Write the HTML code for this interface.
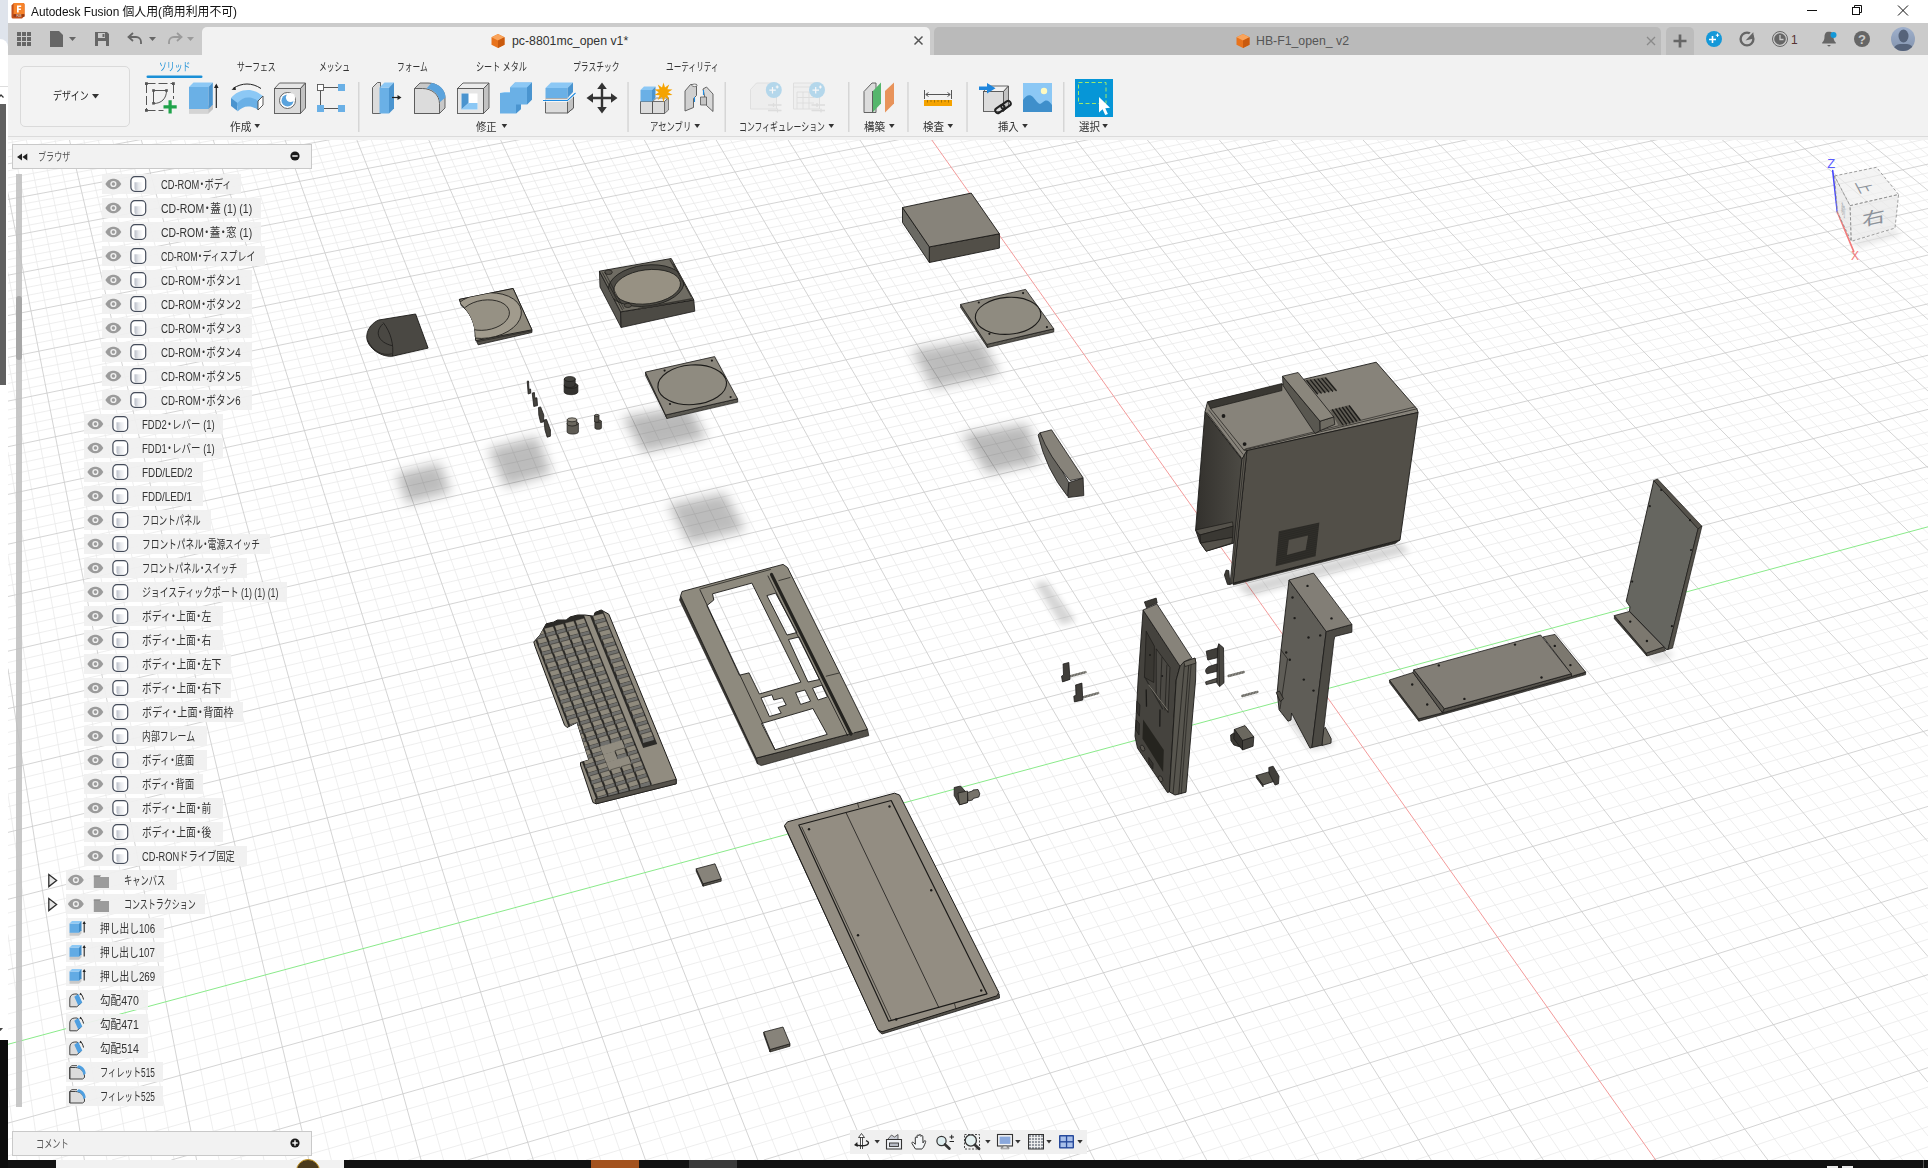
<!DOCTYPE html>
<html lang="ja"><head><meta charset="utf-8"><title>Autodesk Fusion</title>
<style>
html,body{margin:0;padding:0;background:#fff;overflow:hidden}
body{width:1928px;height:1168px;position:relative;font-family:"Liberation Sans","Noto Sans CJK JP",sans-serif;color:#222;font-size:12px}
.a{position:absolute}
.t{position:absolute;white-space:nowrap;line-height:1}
#vp{position:absolute;left:8px;top:137px;width:1920px;height:1023px;overflow:hidden;background:#fff}
#vp svg{position:absolute;left:-8px;top:-137px}
.md{margin:0 -.22em}
.row{position:absolute;height:20px;background:rgba(240,240,240,.92);}
.row .lb{position:absolute;top:4px;font-size:11.5px;white-space:nowrap;line-height:13px;color:#333;letter-spacing:-0.2px}
</style></head><body>
<div id="vp"><svg width="1928" height="1168" viewBox="0 0 1928 1168">
<path d="M8 143L41.4 137M8 149.9L79.2 137M8 156.8L117.1 137M8 170.8L192.8 137M8 177.9L230.7 137M8 185.1L268.6 137M8 192.3L306.4 137M8 206.8L382.2 137M8 214.2L420 137M8 221.6L457.9 137M8 229.1L495.8 137M8 244.2L571.5 137M8 251.9L609.4 137M8 259.6L647.2 137M8 267.4L685.1 137M8 283.2L760.8 137M8 291.1L798.7 137M8 299.2L836.6 137M8 307.3L874.4 137M8 323.7L950.2 137M8 332L988 137M8 340.4L1025.9 137M8 348.8L1063.8 137M8 366L1139.5 137M8 374.6L1177.4 137M8 383.4L1215.3 137M8 392.2L1253.1 137M8 410L1328.9 137M8 419.1L1366.8 137M8 428.2L1404.6 137M8 437.4L1442.5 137M8 456.1L1518.3 137M8 465.5L1556.1 137M8 475.1L1594 137M8 484.7L1631.9 137M8 504.2L1707.6 137M8 514.1L1745.5 137M8 524L1783.4 137M8 534.1L1821.2 137M8 554.5L1897 137M8 564.8L1928 138.5M8 575.3L1928 147M8 585.8L1928 155.5M8 607.2L1928 172.8M8 618L1928 181.6M8 629L1928 190.5M8 640L1928 199.4M8 662.5L1928 217.6M8 673.8L1928 226.8M8 685.3L1928 236.1M8 696.9L1928 245.5M8 720.5L1928 264.5M8 732.4L1928 274.2M8 744.5L1928 284M8 756.7L1928 293.9M8 781.4L1928 313.9M8 794L1928 324.1M8 806.7L1928 334.4M8 819.5L1928 344.7M8 845.5L1928 365.8M8 858.8L1928 376.6M8 872.1L1928 387.4M8 885.6L1928 398.3M8 913.1L1928 420.6M8 927.1L1928 431.9M8 941.2L1928 443.3M8 955.4L1928 454.8M8 984.4L1928 478.3M8 999.1L1928 490.2M8 1014L1928 502.3M8 1029.1L1928 514.5M8 1059.7L1928 539.3M8 1075.3L1928 551.9M8 1091.1L1928 564.7M8 1107L1928 577.6M8 1139.4L1928 603.9M8 1155.9L1928 617.2M52.8 1160L1928 630.7M112 1160L1928 644.4M230.5 1160L1928 672.3M289.8 1160L1928 686.5M349 1160L1928 700.8M408.3 1160L1928 715.4M526.8 1160L1928 745M586 1160L1928 760M645.3 1160L1928 775.3M704.6 1160L1928 790.8M823.1 1160L1928 822.3M882.3 1160L1928 838.3M941.6 1160L1928 854.6M1000.8 1160L1928 871.1M1119.4 1160L1928 904.7M1178.6 1160L1928 921.8M1237.9 1160L1928 939.2M1297.1 1160L1928 956.8M1415.6 1160L1928 992.7M1474.9 1160L1928 1011M1534.2 1160L1928 1029.6M1593.4 1160L1928 1048.5M1712 1160L1928 1087M1771.2 1160L1928 1106.6M1830.5 1160L1928 1126.6M1889.7 1160L1928 1146.8M8 1091.1L17.1 1160M8 934.4L39.5 1160M8 794.4L62 1160M8 555.2L106.9 1160M8 452.1L129.3 1160M8 358.2L151.7 1160M8 272.2L174.2 1160M11.4 137L219.1 1160M25.7 137L241.5 1160M40.1 137L264 1160M54.4 137L286.4 1160M83.1 137L331.3 1160M97.5 137L353.8 1160M111.8 137L376.2 1160M126.2 137L398.6 1160M154.9 137L443.5 1160M169.2 137L466 1160M183.6 137L488.4 1160M197.9 137L510.9 1160M226.6 137L555.8 1160M241 137L578.2 1160M255.3 137L600.7 1160M269.6 137L623.1 1160M298.3 137L668 1160M312.7 137L690.4 1160M327 137L712.9 1160M341.4 137L735.3 1160M370.1 137L780.2 1160M384.4 137L802.7 1160M398.8 137L825.1 1160M413.1 137L847.6 1160M441.8 137L892.5 1160M456.2 137L914.9 1160M470.5 137L937.3 1160M484.9 137L959.8 1160M513.6 137L1004.7 1160M527.9 137L1027.1 1160M542.3 137L1049.6 1160M556.6 137L1072 1160M585.3 137L1116.9 1160M599.7 137L1139.4 1160M614 137L1161.8 1160M628.4 137L1184.3 1160M657.1 137L1229.2 1160M671.4 137L1251.6 1160M685.8 137L1274.1 1160M700.1 137L1296.5 1160M728.8 137L1341.4 1160M743.1 137L1363.8 1160M757.5 137L1386.3 1160M771.8 137L1408.7 1160M800.5 137L1453.6 1160M814.9 137L1476.1 1160M829.2 137L1498.5 1160M843.6 137L1521 1160M872.3 137L1565.9 1160M886.6 137L1588.3 1160M901 137L1610.8 1160M915.3 137L1633.2 1160M944 137L1678.1 1160M958.4 137L1700.6 1160M972.7 137L1723 1160M987.1 137L1745.5 1160M1015.8 137L1790.4 1160M1030.1 137L1812.8 1160M1044.5 137L1835.3 1160M1058.8 137L1857.7 1160M1087.5 137L1902.6 1160M1101.9 137L1925.1 1160M1116.2 137L1928 1136M1130.6 137L1928 1108.9M1159.3 137L1928 1056.2M1173.6 137L1928 1030.5M1188 137L1928 1005.4M1202.3 137L1928 980.7M1231 137L1928 932.7M1245.4 137L1928 909.3M1259.7 137L1928 886.4M1274.1 137L1928 863.8M1302.8 137L1928 819.9M1317.1 137L1928 798.5M1331.5 137L1928 777.5M1345.8 137L1928 756.8M1374.5 137L1928 716.5M1388.9 137L1928 696.8M1403.2 137L1928 677.5M1417.6 137L1928 658.4M1446.3 137L1928 621.3M1460.6 137L1928 603.1M1475 137L1928 585.3M1489.3 137L1928 567.7M1518 137L1928 533.4M1532.4 137L1928 516.6M1546.7 137L1928 500.1M1561.1 137L1928 483.8M1589.8 137L1928 451.9M1604.2 137L1928 436.4M1618.5 137L1928 421M1632.9 137L1928 405.9M1661.6 137L1928 376.3M1675.9 137L1928 361.8M1690.3 137L1928 347.5M1704.6 137L1928 333.4M1733.3 137L1928 305.8M1747.7 137L1928 292.3M1762 137L1928 279M1776.4 137L1928 265.9M1805.1 137L1928 240.1M1819.4 137L1928 227.4M1833.8 137L1928 215M1848.1 137L1928 202.7M1876.8 137L1928 178.5M1891.2 137L1928 166.7M1905.5 137L1928 155M1919.9 137L1928 143.5" stroke="#eaeaea" stroke-width=".8" fill="none"/>
<path d="M8 163.8L155 137M8 199.5L344.3 137M8 236.6L533.6 137M8 275.2L723 137M8 315.5L912.3 137M8 357.4L1101.7 137M8 401.1L1291 137M8 446.7L1480.4 137M8 494.4L1669.7 137M8 544.2L1859.1 137M8 596.5L1928 164.1M8 651.2L1928 208.5M8 708.6L1928 255M8 769L1928 303.8M8 832.4L1928 355.2M8 899.3L1928 409.4M8 969.8L1928 466.5M8 1123.1L1928 590.6M171.3 1160L1928 658.3M467.5 1160L1928 730.1M763.8 1160L1928 806.4M1060.1 1160L1928 887.8M1356.4 1160L1928 974.6M1652.7 1160L1928 1067.6M8 668.7L84.4 1160M8 193.2L196.6 1160M68.8 137L308.9 1160M140.5 137L421.1 1160M212.3 137L533.3 1160M284 137L645.5 1160M355.7 137L757.8 1160M427.5 137L870 1160M499.2 137L982.2 1160M571 137L1094.5 1160M642.7 137L1206.7 1160M714.4 137L1318.9 1160M786.2 137L1431.2 1160M857.9 137L1543.4 1160M1001.4 137L1767.9 1160M1073.2 137L1880.2 1160M1144.9 137L1928 1082.3M1216.7 137L1928 956.5M1288.4 137L1928 841.7M1360.2 137L1928 736.5M1431.9 137L1928 639.7M1503.7 137L1928 550.4M1575.5 137L1928 467.7M1647.2 137L1928 391M1719 137L1928 319.5M1790.7 137L1928 252.9M1862.5 137L1928 190.5" stroke="#cccccc" stroke-width=".85" fill="none"/>
<path d="M929.7 137L1655.7 1160" stroke="#f39a9a" stroke-width="1" fill="none"/>
<path d="M8 1044.3L1928 526.8" stroke="#8aea8a" stroke-width="1" fill="none"/>
<defs>
<filter id="sh" x="-40%" y="-40%" width="180%" height="180%"><feGaussianBlur stdDeviation="6"/></filter>
<filter id="sh2" x="-40%" y="-40%" width="180%" height="180%"><feGaussianBlur stdDeviation="3"/></filter>
<linearGradient id="gl" x1="0" y1="0" x2="1" y2="0"><stop offset="0" stop-color="#33312d"/><stop offset="1" stop-color="#4c4a44"/></linearGradient>
<pattern id="dots" width="2" height="2" patternUnits="userSpaceOnUse" patternTransform="rotate(-14)"><rect width="2" height="2" fill="#1f1e1b"/><circle cx="1" cy="1" r=".62" fill="#5a574f"/></pattern>
</defs>
<polygon points="396,474 440,463 451,492 407,504" fill="#000" opacity="0.26" filter="url(#sh)"/>
<polygon points="488.1,448.7 537.5,436.3 551.6,473.3 505.8,487.5" fill="#000" opacity="0.26" filter="url(#sh)"/>
<polygon points="622.2,416.9 689.2,406.3 706.8,438.1 643.3,452.2" fill="#000" opacity="0.27" filter="url(#sh)"/>
<polygon points="668,505.1 724.5,492.8 745.6,529.8 689.2,543.9" fill="#000" opacity="0.26" filter="url(#sh)"/>
<polygon points="911.4,349.9 982,339.3 999.6,374.6 932.6,388.7" fill="#000" opacity="0.26" filter="url(#sh)"/>
<polygon points="961.2,435 1027.5,423.8 1040,462.5 987.5,473.8" fill="#000" opacity="0.27" filter="url(#sh)"/>
<polygon points="1034,583 1046,581 1076,621 1061,625" fill="#000" opacity="0.16" filter="url(#sh2)"/>
<polygon points="1236,586 1400,543 1410,552 1250,596" fill="#000" opacity="0.16" filter="url(#sh2)"/>
<polygon points="1205,411.9 1241.9,459.4 1235.6,542.5 1206.2,551.2 1200,542.5 1195.6,530" fill="url(#gl)" stroke="#1c1b19" stroke-width="0.9" stroke-linejoin="round" />
<polygon points="1195.6,530 1232.5,521.9 1233.1,526.2 1200,535" fill="#55524b" stroke="#1c1b19" stroke-width="0.7" stroke-linejoin="round" />
<polygon points="1200,535 1233.1,526.2 1232.5,537.5 1200.6,543.1" fill="#3a3833" stroke="#1c1b19" stroke-width="0.7" stroke-linejoin="round" />
<polygon points="1200.6,543.1 1232.5,537.5 1231.9,543.1 1206.2,551.2" fill="#55524b" stroke="#1c1b19" stroke-width="0.7" stroke-linejoin="round" />
<polygon points="1207.5,401.9 1376.2,362.2 1416.9,408.8 1418.1,412.5 1246.9,450.6 1241.9,459.4 1205,411.9" fill="#87837a" stroke="#1c1b19" stroke-width="0.9" stroke-linejoin="round" />
<polygon points="1207.5,401.9 1281.9,383.5 1281.9,390.6 1210.6,408.5" fill="#3a3833" stroke="#1c1b19" stroke-width="0.7" stroke-linejoin="round" />
<polyline points="1210.6,408.5 1243.8,450" fill="none" stroke="#1c1b19" stroke-width="0.7" stroke-linejoin="round" stroke-linecap="round" />
<polyline points="1206.9,412.5 1241.2,457.5" fill="none" stroke="#1c1b19" stroke-width="0.7" stroke-linejoin="round" stroke-linecap="round" />
<polyline points="1208.8,410 1243.1,454.4" fill="none" stroke="#1c1b19" stroke-width="0.6" stroke-linejoin="round" stroke-linecap="round" />
<polyline points="1246.9,450.6 1243.8,450 1416.9,408.8" fill="none" stroke="#1c1b19" stroke-width="0.7" stroke-linejoin="round" stroke-linecap="round" />
<polyline points="1245.6,448.8 1415,406.9" fill="none" stroke="#1c1b19" stroke-width="0.6" stroke-linejoin="round" stroke-linecap="round" />
<circle cx="1223.5" cy="416" r="1.9" fill="#1c1b19" stroke="none" stroke-width="0.9"/>
<circle cx="1244.6" cy="444.1" r="1.9" fill="#1c1b19" stroke="none" stroke-width="0.9"/>
<polygon points="1305,380 1326.2,376.9 1336.9,390 1316.2,393.8" fill="#5f5c54" stroke="none" stroke-width="0.9" stroke-linejoin="round" />
<polyline points="1306.9,380.6 1317.5,393.8" fill="none" stroke="#1c1b19" stroke-width="1.3" stroke-linejoin="round" stroke-linecap="round" />
<polyline points="1310.6,380.1 1321.2,393.1" fill="none" stroke="#1c1b19" stroke-width="1.3" stroke-linejoin="round" stroke-linecap="round" />
<polyline points="1314.4,379.6 1325,392.5" fill="none" stroke="#1c1b19" stroke-width="1.3" stroke-linejoin="round" stroke-linecap="round" />
<polyline points="1318.1,379.1 1328.8,391.9" fill="none" stroke="#1c1b19" stroke-width="1.3" stroke-linejoin="round" stroke-linecap="round" />
<polyline points="1321.9,378.6 1332.5,391.2" fill="none" stroke="#1c1b19" stroke-width="1.3" stroke-linejoin="round" stroke-linecap="round" />
<polyline points="1325.6,378.1 1336.2,390.6" fill="none" stroke="#1c1b19" stroke-width="1.3" stroke-linejoin="round" stroke-linecap="round" />
<polygon points="1330,410 1349.4,405 1361.2,420 1338.8,426.2" fill="#5f5c54" stroke="none" stroke-width="0.9" stroke-linejoin="round" />
<polyline points="1332.5,409.8 1343.1,425" fill="none" stroke="#1c1b19" stroke-width="1.3" stroke-linejoin="round" stroke-linecap="round" />
<polyline points="1335.9,409 1346.5,424" fill="none" stroke="#1c1b19" stroke-width="1.3" stroke-linejoin="round" stroke-linecap="round" />
<polyline points="1339.2,408.2 1349.9,423" fill="none" stroke="#1c1b19" stroke-width="1.3" stroke-linejoin="round" stroke-linecap="round" />
<polyline points="1342.6,407.5 1353.2,422" fill="none" stroke="#1c1b19" stroke-width="1.3" stroke-linejoin="round" stroke-linecap="round" />
<polyline points="1346,406.8 1356.6,421" fill="none" stroke="#1c1b19" stroke-width="1.3" stroke-linejoin="round" stroke-linecap="round" />
<polyline points="1349.4,406 1360,420" fill="none" stroke="#1c1b19" stroke-width="1.3" stroke-linejoin="round" stroke-linecap="round" />
<polygon points="1282.5,376.2 1320,421.2 1320.2,430.6 1315,433.5 1283.1,385.6" fill="#595750" stroke="#1c1b19" stroke-width="0.8" stroke-linejoin="round" />
<polygon points="1320,421.2 1333.8,416.9 1334.8,424.4 1320.2,430.6" fill="#6e6b62" stroke="#1c1b19" stroke-width="0.8" stroke-linejoin="round" />
<polygon points="1282.5,376.2 1298.1,372.5 1333.8,416.9 1320,421.2" fill="#8a867c" stroke="#1c1b19" stroke-width="0.8" stroke-linejoin="round" />
<polygon points="1400,540 1395.2,543.5 1233.1,585 1233.1,583.1" fill="#2e2d29" stroke="#1c1b19" stroke-width="0.6" stroke-linejoin="round" />
<polygon points="1246.9,450.6 1418.1,412.5 1400,540 1233.1,583.1" fill="#524f48" stroke="#1c1b19" stroke-width="0.9" stroke-linejoin="round" />
<polygon points="1241.9,459.4 1246.9,450.6 1233.1,583.1 1230,584.4" fill="#5e5b53" stroke="#1c1b19" stroke-width="0.8" stroke-linejoin="round" />
<polyline points="1244.4,455 1231.5,583.8" fill="none" stroke="#1c1b19" stroke-width="0.6" stroke-linejoin="round" stroke-linecap="round" />
<polygon points="1224.4,575 1226.2,570 1228.8,570.6 1230,584.4 1227.5,584.4" fill="#3d3b36" stroke="#1c1b19" stroke-width="0.8" stroke-linejoin="round" />
<polygon points="1278.8,531.2 1319.4,522.5 1315.6,556.2 1275.6,566.2" fill="url(#dots)" stroke="none" stroke-width="0.9" stroke-linejoin="round" />
<polygon points="1288.8,540 1308.1,535.6 1305.6,550 1286.9,555" fill="#524f48" stroke="none" stroke-width="0.9" stroke-linejoin="round" />
<polygon points="902.5,207.5 929.4,246.9 929.4,262.5 902.5,222.5" fill="#6a6963" stroke="#1c1b19" stroke-width="0.9" stroke-linejoin="round" />
<polygon points="929.4,246.9 999.4,233.8 999.4,248.1 929.4,262.5" fill="#524f48" stroke="#1c1b19" stroke-width="0.9" stroke-linejoin="round" />
<polygon points="902.5,207.5 971.2,193.1 999.4,233.8 929.4,246.9" fill="#87837a" stroke="#1c1b19" stroke-width="0.9" stroke-linejoin="round" />
<polygon points="960.6,304.4 986.9,344.4 987.5,347.5 960.6,307.5" fill="#5b5952" stroke="#1c1b19" stroke-width="0.7" stroke-linejoin="round" />
<polygon points="986.9,344.4 1053.8,328.8 1053.8,331.9 987.5,347.5" fill="#5b5952" stroke="#1c1b19" stroke-width="0.7" stroke-linejoin="round" />
<polygon points="960.6,304.4 1025.6,289.4 1053.8,328.8 986.9,344.4" fill="#8b877d" stroke="#1c1b19" stroke-width="0.8" stroke-linejoin="round" />
<ellipse cx="1008.1" cy="315.8" rx="32.8" ry="18.5" transform="rotate(-4 1008.1 315.8)" fill="#8f8b80" stroke="#1c1b19" stroke-width="1.1"/>
<circle cx="1023.1" cy="293.1" r="1.1" fill="#1c1b19" stroke="none" stroke-width="0.9"/>
<circle cx="978.8" cy="302.5" r="1.1" fill="#1c1b19" stroke="none" stroke-width="0.9"/>
<circle cx="1046.9" cy="327.1" r="1.1" fill="#1c1b19" stroke="none" stroke-width="0.9"/>
<circle cx="989.4" cy="333.8" r="1.1" fill="#1c1b19" stroke="none" stroke-width="0.9"/>
<polygon points="645.4,372.1 665.6,415 666.9,418.5 645.6,375.6" fill="#5b5952" stroke="#1c1b19" stroke-width="0.7" stroke-linejoin="round" />
<polygon points="665.6,415 737.5,398.8 737.8,402.1 666.9,418.5" fill="#5b5952" stroke="#1c1b19" stroke-width="0.7" stroke-linejoin="round" />
<polygon points="645.4,372.1 714.6,356.6 737.5,398.8 665.6,415" fill="#8b877d" stroke="#1c1b19" stroke-width="0.8" stroke-linejoin="round" />
<ellipse cx="692.2" cy="384.8" rx="34.4" ry="19.8" transform="rotate(-4 692.2 384.8)" fill="#8f8b80" stroke="#1c1b19" stroke-width="1.1"/>
<circle cx="711.9" cy="360.6" r="1.1" fill="#1c1b19" stroke="none" stroke-width="0.9"/>
<circle cx="664.6" cy="370.6" r="1.1" fill="#1c1b19" stroke="none" stroke-width="0.9"/>
<circle cx="730.6" cy="397.1" r="1.1" fill="#1c1b19" stroke="none" stroke-width="0.9"/>
<circle cx="670" cy="404" r="1.1" fill="#1c1b19" stroke="none" stroke-width="0.9"/>
<path d="M1038.1,435 Q1046.2,470 1067.5,496.2 L1068.8,482.5 L1040,432.8 Z" fill="#66645e" stroke="#1c1b19" stroke-width=".8"/>
<polygon points="1068.8,482.5 1083.1,478.1 1083.8,495.6 1068.1,497.5" fill="#4e4b45" stroke="#1c1b19" stroke-width="0.8" stroke-linejoin="round" />
<path d="M1040,432.8 L1051.5,429.8 L1083.1,477.8 L1070,480.6 Q1048.8,456.2 1040,432.8 Z" fill="#87837a" stroke="#1c1b19" stroke-width=".8"/>
<polygon points="756.2,758.1 867.5,729.4 868.8,735.6 761.2,765.6 757.5,763.8" fill="#55524b" stroke="#1c1b19" stroke-width="0.7" stroke-linejoin="round" />
<polygon points="680.6,596 756.2,758.1 757.5,763.8 679.5,600" fill="#3a3833" stroke="#1c1b19" stroke-width="0.6" stroke-linejoin="round" />
<path d="M682 591.5 L783.1 564.4 L787.5 567.5 L867.5 729.4 L756.2 758.1 L680.6 596Z M706.9 605.6 L713.8 600 L712.5 593.8 L751.9 583.1 L800.9 682.2 L759.4 694 L749 672.9 L739.4 675.2Z M766.9 595.6 L775.6 593.1 L796.9 632.5 L787 635Z M788.5 639.5 L799 637 L819.5 679.5 L808 682Z M812.5 688.1 L821.9 685.2 L827.5 696.9 L818.1 700Z M795.6 692.5 L805 690 L810.6 701.2 L800.6 704.4Z M761 697.8 L771.9 694.8 L773.8 700 L782.5 697.8 L786.2 705 L778.1 707.5 L781.2 713.1 L769.4 716.5Z M761.5 723.5 L812.9 708.5 L827.2 734.4 L775 749.8Z" fill="#8e8a7e" fill-rule="evenodd" stroke="#1c1b19" stroke-width=".9" stroke-linejoin="round"/>
<polyline points="771.5,574.5 851,734" fill="none" stroke="#24231f" stroke-width="3.2" stroke-linejoin="round" stroke-linecap="round" />
<polyline points="774.3,573.6 853.5,733" fill="none" stroke="#8e8a7e" stroke-width="0.9" stroke-linejoin="round" stroke-linecap="round" />
<polyline points="768,576 847.5,735.5" fill="none" stroke="#1c1b19" stroke-width="0.8" stroke-linejoin="round" stroke-linecap="round" />
<polyline points="700,590 775,749.8" fill="none" stroke="#1c1b19" stroke-width="0.8" stroke-linejoin="round" stroke-linecap="round" />
<polyline points="778.8,580.6 790,577.5" fill="none" stroke="#1c1b19" stroke-width="0.7" stroke-linejoin="round" stroke-linecap="round" />
<polyline points="826.2,676.2 838.8,673.1" fill="none" stroke="#1c1b19" stroke-width="0.7" stroke-linejoin="round" stroke-linecap="round" />
<polyline points="700,589 770.5,569.5" fill="none" stroke="#1c1b19" stroke-width="0.7" stroke-linejoin="round" stroke-linecap="round" />
<path d="M784.5 826.2 L878.8 1031.2 L882 1034 L999.5 998 L999.2 993.8Z" fill="#55524b" stroke="#1c1b19" stroke-width=".8" stroke-linejoin="round"/>
<polygon points="784.5,825.5 787.5,821.8 894.5,793.2 899.5,795 998.8,992.5 997,995.8 882,1031.8 878,1030" fill="#938d82" stroke="#1c1b19" stroke-width="1" stroke-linejoin="round"/>
<polygon points="798.8,825 891.2,800.5 987,993.8 888.8,1021.2" fill="#938d82" stroke="#1c1b19" stroke-width="1.2" stroke-linejoin="round" />
<polyline points="846.2,813 938.8,1007.5" fill="none" stroke="#1c1b19" stroke-width="0.8" stroke-linejoin="round" stroke-linecap="round" />
<polyline points="801.8,827 891.2,1020" fill="none" stroke="#1c1b19" stroke-width="0.7" stroke-linejoin="round" stroke-linecap="round" />
<polyline points="857.5,803 858.8,807.5" fill="none" stroke="#1c1b19" stroke-width="0.7" stroke-linejoin="round" stroke-linecap="round" />
<polyline points="954.5,1003.8 956,1008.8" fill="none" stroke="#1c1b19" stroke-width="0.7" stroke-linejoin="round" stroke-linecap="round" />
<circle cx="809" cy="829.2" r="1.2" fill="#1c1b19" stroke="none" stroke-width="0.9"/>
<circle cx="889.5" cy="806.5" r="1.2" fill="#1c1b19" stroke="none" stroke-width="0.9"/>
<circle cx="931.2" cy="890.2" r="1.2" fill="#1c1b19" stroke="none" stroke-width="0.9"/>
<circle cx="858" cy="935.2" r="1.2" fill="#1c1b19" stroke="none" stroke-width="0.9"/>
<circle cx="981.2" cy="990.5" r="1.2" fill="#1c1b19" stroke="none" stroke-width="0.9"/>
<circle cx="896.2" cy="1019.5" r="1.2" fill="#1c1b19" stroke="none" stroke-width="0.9"/>
<polygon points="703,883.8 721.2,878.8 721.2,881.2 703,886.2" fill="#55524b" stroke="#1c1b19" stroke-width="0.7" stroke-linejoin="round" />
<polygon points="696.2,868.8 703,883.8 703,886.2 696.2,871.2" fill="#45433e" stroke="#1c1b19" stroke-width="0.7" stroke-linejoin="round" />
<polygon points="696.2,868.8 715,863.8 721.2,878.8 703,883.8" fill="#87837a" stroke="#1c1b19" stroke-width="0.8" stroke-linejoin="round" />
<polygon points="770,1049.5 790,1043.8 790,1046.2 770,1052" fill="#55524b" stroke="#1c1b19" stroke-width="0.7" stroke-linejoin="round" />
<polygon points="763.8,1032 770,1049.5 770,1052 763.8,1034.5" fill="#45433e" stroke="#1c1b19" stroke-width="0.7" stroke-linejoin="round" />
<polygon points="763.8,1032 783,1027 790,1043.8 770,1049.5" fill="#87837a" stroke="#1c1b19" stroke-width="0.8" stroke-linejoin="round" />
<polygon points="954.2,787.5 960.5,786 967.5,793.8 967.5,802.5 959.5,804.8 954.2,795.5" fill="#4a4843" stroke="#1c1b19" stroke-width="0.8" stroke-linejoin="round" />
<polygon points="958,793 967.5,791 967.5,802.5 959.5,804.8" fill="#6b685f" stroke="#1c1b19" stroke-width="0.7" stroke-linejoin="round" />
<polygon points="967.5,792.5 972.5,791 973,790 978,789.5 979.8,793.8 978.8,797 973,798.5 972.5,800 968,801" fill="#77736a" stroke="#1c1b19" stroke-width="0.8" stroke-linejoin="round" />
<polygon points="1135,738.8 1167.5,792.5 1185,792.5 1145,736.2" fill="#000" opacity=".18" filter="url(#sh2)"/>
<polygon points="1144.4,601.9 1156.2,598.1 1157.2,603.1 1150,606.2 1146.5,607.8" fill="#3d3b36" stroke="#1c1b19" stroke-width="0.8" stroke-linejoin="round" />
<polygon points="1143.1,610 1180,666.2 1176.2,680 1169.4,791.9 1167.5,792.5 1137.5,748.1 1135,736.2 1138.1,680" fill="#45433e" stroke="#1c1b19" stroke-width="0.9" stroke-linejoin="round" />
<polygon points="1180,666.2 1183.8,661.9 1195,658.1 1195.9,663.1 1195.6,680 1186,792.2 1175,795 1169.4,791.9 1176.2,680" fill="#57554e" stroke="#1c1b19" stroke-width="0.9" stroke-linejoin="round" />
<polyline points="1184.4,665 1173.1,793.1" fill="none" stroke="#1c1b19" stroke-width="0.7" stroke-linejoin="round" stroke-linecap="round" />
<polyline points="1188.8,663.8 1178.8,794" fill="none" stroke="#1c1b19" stroke-width="0.7" stroke-linejoin="round" stroke-linecap="round" />
<polyline points="1191.2,663.1 1181.2,793.5" fill="none" stroke="#1c1b19" stroke-width="0.6" stroke-linejoin="round" stroke-linecap="round" />
<polygon points="1143.1,610 1156.9,604 1191.9,658.1 1183.8,661.9 1180,666.2" fill="#87837a" stroke="#1c1b19" stroke-width="0.8" stroke-linejoin="round" />
<polygon points="1183.8,661.9 1195,658.1 1195.9,663.1 1185,666.5" fill="#6b685f" stroke="#1c1b19" stroke-width="0.7" stroke-linejoin="round" />
<polygon points="1146.2,631.2 1154.4,646.2 1153.8,682.5 1144.4,677.5" fill="#3a3833" stroke="#1c1b19" stroke-width="0.7" stroke-linejoin="round" />
<polygon points="1156.2,648.8 1170,667.5 1168.1,712.5 1156.2,693.8" fill="#4b4944" stroke="#1c1b19" stroke-width="0.7" stroke-linejoin="round" />
<polyline points="1161.9,657.5 1160,702.5" fill="none" stroke="#1c1b19" stroke-width="0.7" stroke-linejoin="round" stroke-linecap="round" />
<polyline points="1166.9,665 1165,710" fill="none" stroke="#1c1b19" stroke-width="0.7" stroke-linejoin="round" stroke-linecap="round" />
<polyline points="1145,677.5 1162.5,708.8" fill="none" stroke="#2a2926" stroke-width="1.2" stroke-linejoin="round" stroke-linecap="round" />
<polyline points="1148.8,685 1167.5,710" fill="none" stroke="#8a867c" stroke-width="0.8" stroke-linejoin="round" stroke-linecap="round" />
<polyline points="1146.2,690 1146.5,706.2" fill="none" stroke="#1c1b19" stroke-width="1.3" stroke-linejoin="round" stroke-linecap="round" />
<polyline points="1160,710 1159.8,726.2" fill="none" stroke="#1c1b19" stroke-width="1.3" stroke-linejoin="round" stroke-linecap="round" />
<circle cx="1150" cy="655" r="1" fill="#1c1b19" stroke="none" stroke-width="0.9"/>
<circle cx="1162.2" cy="676" r="1" fill="#1c1b19" stroke="none" stroke-width="0.9"/>
<polygon points="1143.1,719.4 1163.8,750 1163.1,771.9 1142.5,738.8" fill="#25241f" stroke="none" stroke-width="0.9" stroke-linejoin="round" />
<ellipse cx="1142.5" cy="748.1" rx="1.900" ry="3.200" fill="#5a5750" stroke="#1c1b19" stroke-width=".7" transform="rotate(-25 1142.5 748.1)"/>
<ellipse cx="1160.6" cy="778.8" rx="1.900" ry="3.200" fill="#5a5750" stroke="#1c1b19" stroke-width=".7" transform="rotate(-25 1160.6 778.8)"/>
<polygon points="1148.8,757.5 1153.1,763.8 1152.8,768.8 1148.8,762.5" fill="#35332f" stroke="#1c1b19" stroke-width="0.7" stroke-linejoin="round" />
<polygon points="1136.9,701.2 1140,705 1139.4,716.2 1136.5,711.2" fill="#35332f" stroke="#1c1b19" stroke-width="0.6" stroke-linejoin="round" />
<polygon points="1136.2,720 1139.4,723.8 1139,735 1136,730" fill="#35332f" stroke="#1c1b19" stroke-width="0.6" stroke-linejoin="round" />
<line x1="1070.6" y1="676.2" x2="1085.6" y2="672.2" stroke="#8d8c86" stroke-width="2.400" stroke-linecap="round"/>
<line x1="1070.6" y1="676.2" x2="1085.6" y2="672.2" stroke="#4d4c48" stroke-width="2.400" stroke-dasharray=".45 1.100"/>
<polygon points="1063.1,664 1068.8,662.5 1070,679.4 1062.5,681.9 1061.5,676.2 1063.5,675" fill="#403e3a" stroke="#1c1b19" stroke-width="0.8" stroke-linejoin="round" />
<line x1="1083.5" y1="697.2" x2="1098.1" y2="693.1" stroke="#8d8c86" stroke-width="2.400" stroke-linecap="round"/>
<line x1="1083.5" y1="697.2" x2="1098.1" y2="693.1" stroke="#4d4c48" stroke-width="2.400" stroke-dasharray=".45 1.100"/>
<polygon points="1075.6,685 1081.9,683.1 1082.8,700 1074.4,701.9 1073.8,696.2 1076,695.2" fill="#403e3a" stroke="#1c1b19" stroke-width="0.8" stroke-linejoin="round" />
<line x1="1228.5" y1="676" x2="1243.8" y2="672" stroke="#8d8c86" stroke-width="2.400" stroke-linecap="round"/>
<line x1="1228.5" y1="676" x2="1243.8" y2="672" stroke="#4d4c48" stroke-width="2.400" stroke-dasharray=".45 1.100"/>
<polygon points="1050,590 1050,590 1050,590" fill="#403e3a" stroke="#1c1b19" stroke-width="0.8" stroke-linejoin="round" />
<line x1="1242.2" y1="696" x2="1257.5" y2="691.9" stroke="#8d8c86" stroke-width="2.400" stroke-linecap="round"/>
<line x1="1242.2" y1="696" x2="1257.5" y2="691.9" stroke="#4d4c48" stroke-width="2.400" stroke-dasharray=".45 1.100"/>
<polygon points="1050,590 1050,590 1050,590" fill="#403e3a" stroke="#1c1b19" stroke-width="0.8" stroke-linejoin="round" />
<polygon points="1206.2,651.2 1217.5,648.1 1218.1,657.5 1207.8,660" fill="#403e3a" stroke="#1c1b19" stroke-width="0.8" stroke-linejoin="round" />
<path d="M1206.9,673.8 L1217.5,671.2 L1217.5,663.8 L1208.8,666.5 Q1203.5,670 1206.9,673.8 Z" fill="#403e3a" stroke="#1c1b19" stroke-width=".8"/>
<polygon points="1205.6,681.9 1217.5,678.1 1217.5,681.9 1206.2,684.6" fill="#55534d" stroke="#1c1b19" stroke-width="0.8" stroke-linejoin="round" />
<polygon points="1217.5,648.1 1218.8,643.8 1223.5,647.8 1224,682.8 1219.6,686.5 1216.9,683.1" fill="#4a4843" stroke="#1c1b19" stroke-width="0.8" stroke-linejoin="round" />
<polyline points="1218.8,644 1219.6,686.2" fill="none" stroke="#1c1b19" stroke-width="0.6" stroke-linejoin="round" stroke-linecap="round" />
<polygon points="1230.6,735 1233.8,733.1 1240,738.8 1240,746.9 1233.8,745 1230.9,740.6" fill="#3d3b36" stroke="#1c1b19" stroke-width="0.8" stroke-linejoin="round" />
<polygon points="1234.4,729.4 1245,725.6 1253.8,736.9 1242.5,740.6" fill="#6b685f" stroke="#1c1b19" stroke-width="0.8" stroke-linejoin="round" />
<polygon points="1242.5,740.6 1253.8,736.9 1253.1,746.2 1242.5,750" fill="#45433e" stroke="#1c1b19" stroke-width="0.8" stroke-linejoin="round" />
<polygon points="1234.4,729.4 1242.5,740.6 1242.5,750 1240,746.9 1233.8,738.8" fill="#35332f" stroke="#1c1b19" stroke-width="0.8" stroke-linejoin="round" />
<polygon points="1256.2,775.6 1268.8,771.9 1274.4,781.2 1263.1,785" fill="#5a5850" stroke="#1c1b19" stroke-width="0.8" stroke-linejoin="round" />
<polygon points="1268.8,767.5 1273.1,766.2 1279,776.2 1278.5,783.8 1275,785 1269,773.1" fill="#403e3a" stroke="#1c1b19" stroke-width="0.8" stroke-linejoin="round" />
<polygon points="1256.2,775.6 1263.1,785 1263.1,786.9 1256.5,778.1" fill="#35332f" stroke="#1c1b19" stroke-width="0.7" stroke-linejoin="round" />
<polygon points="1280,708.8 1311.2,750 1333.8,745 1327.5,730" fill="#000" opacity=".16" filter="url(#sh2)"/>
<polygon points="1323.1,730 1325.2,727.2 1331.2,738.8 1331,743.1 1321.9,745.6" fill="#6b685f" stroke="#1c1b19" stroke-width="0.8" stroke-linejoin="round" />
<polygon points="1289,580 1326.2,631.5 1311.9,747.5 1310,748.1 1291.5,713.1 1291,720 1288.1,721.2 1279.1,709.8 1277.2,692.5 1281,650" fill="#5f5d57" stroke="#1c1b19" stroke-width="0.9" stroke-linejoin="round" />
<polyline points="1281,650 1287.5,658.8 1280,708.8" fill="none" stroke="#1c1b19" stroke-width="0.7" stroke-linejoin="round" stroke-linecap="round" />
<polygon points="1326.2,631.5 1351.9,624.4 1351.9,632.2 1334.8,636.5 1334,640 1321.9,745.2 1311.9,747.5" fill="#4c4a44" stroke="#1c1b19" stroke-width="0.8" stroke-linejoin="round" />
<polygon points="1289,580 1313.5,573.1 1351.9,624.4 1326.2,631.5" fill="#827e76" stroke="#1c1b19" stroke-width="0.8" stroke-linejoin="round" />
<circle cx="1307.5" cy="585.9" r="1.2" fill="#1c1b19" stroke="none" stroke-width="0.9"/>
<circle cx="1331.5" cy="618.4" r="1.2" fill="#1c1b19" stroke="none" stroke-width="0.9"/>
<circle cx="1292.5" cy="597.5" r="1.2" fill="#1c1b19" stroke="none" stroke-width="0.9"/>
<circle cx="1294.6" cy="618.1" r="1.2" fill="#1c1b19" stroke="none" stroke-width="0.9"/>
<circle cx="1308.5" cy="637.5" r="1.2" fill="#1c1b19" stroke="none" stroke-width="0.9"/>
<circle cx="1320.2" cy="635.4" r="1.2" fill="#1c1b19" stroke="none" stroke-width="0.9"/>
<circle cx="1286.2" cy="652.5" r="1.2" fill="#1c1b19" stroke="none" stroke-width="0.9"/>
<circle cx="1289.8" cy="659.8" r="1.2" fill="#1c1b19" stroke="none" stroke-width="0.9"/>
<circle cx="1303.8" cy="679.6" r="1.2" fill="#1c1b19" stroke="none" stroke-width="0.9"/>
<circle cx="1313.5" cy="690.6" r="1.2" fill="#1c1b19" stroke="none" stroke-width="0.9"/>
<polygon points="1276.2,692.5 1279.4,691 1283.5,698.8 1280.2,701.5" fill="#55524b" stroke="#1c1b19" stroke-width="0.8" stroke-linejoin="round" />
<polygon points="1389.4,680 1418.8,718.8 1418.8,721.2 1389.6,682.8" fill="#3d3b36" stroke="#1c1b19" stroke-width="0.7" stroke-linejoin="round" />
<polygon points="1418.8,718.8 1443.1,712.8 1571.5,676.5 1585.6,672.1 1585.6,674.6 1418.8,721.2" fill="#45433e" stroke="#1c1b19" stroke-width="0.7" stroke-linejoin="round" />
<polygon points="1389.4,680 1413.1,672.5 1442.5,712.8 1418.8,718.8" fill="#7c786f" stroke="#1c1b19" stroke-width="0.8" stroke-linejoin="round" />
<polygon points="1543.1,636.9 1555,634.4 1585.6,672.1 1571.2,676.5 1571.2,673.8" fill="#7c786f" stroke="#1c1b19" stroke-width="0.8" stroke-linejoin="round" />
<polygon points="1413.8,669.8 1444.4,708.8 1442.5,712.8 1413.1,672.5" fill="#5a5750" stroke="#1c1b19" stroke-width="0.8" stroke-linejoin="round" />
<polygon points="1444.4,708.8 1571.2,673.8 1571.5,676.5 1442.5,712.8" fill="#55524b" stroke="#1c1b19" stroke-width="0.8" stroke-linejoin="round" />
<polygon points="1413.8,669.8 1540.6,635 1571.2,673.8 1444.4,708.8" fill="#827e76" stroke="#1c1b19" stroke-width="0.8" stroke-linejoin="round" />
<circle cx="1438.8" cy="665.4" r="1.2" fill="#1c1b19" stroke="none" stroke-width="0.9"/>
<circle cx="1515" cy="644.6" r="1.2" fill="#1c1b19" stroke="none" stroke-width="0.9"/>
<circle cx="1541.5" cy="677.5" r="1.2" fill="#1c1b19" stroke="none" stroke-width="0.9"/>
<circle cx="1464.4" cy="698.9" r="1.2" fill="#1c1b19" stroke="none" stroke-width="0.9"/>
<circle cx="1412.2" cy="684.5" r="1.2" fill="#1c1b19" stroke="none" stroke-width="0.9"/>
<circle cx="1427.2" cy="704.5" r="1.2" fill="#1c1b19" stroke="none" stroke-width="0.9"/>
<circle cx="1554.8" cy="645.9" r="1.2" fill="#1c1b19" stroke="none" stroke-width="0.9"/>
<circle cx="1570.4" cy="665.1" r="1.2" fill="#1c1b19" stroke="none" stroke-width="0.9"/>
<polygon points="1646.2,655 1667.5,650 1675,655 1655,662.5" fill="#000" opacity=".12" filter="url(#sh2)"/>
<polygon points="1614.4,615.6 1646.2,653.1 1646.9,656 1614.4,618.8" fill="#3d3b36" stroke="#1c1b19" stroke-width="0.7" stroke-linejoin="round" />
<polygon points="1646.2,653.1 1663.8,646.9 1665.6,650.6 1646.9,656" fill="#55524b" stroke="#1c1b19" stroke-width="0.7" stroke-linejoin="round" />
<polygon points="1614.4,615.6 1629.4,611.5 1663.8,646.9 1646.2,653.1" fill="#7c786f" stroke="#1c1b19" stroke-width="0.8" stroke-linejoin="round" />
<circle cx="1630.2" cy="621.6" r="1.2" fill="#1c1b19" stroke="none" stroke-width="0.9"/>
<circle cx="1646.9" cy="641" r="1.2" fill="#1c1b19" stroke="none" stroke-width="0.9"/>
<polygon points="1653.8,480.6 1698.1,528.8 1668.1,649.4 1666.2,649.4 1663.1,645.6 1629.4,611.2 1630,606.9 1626.2,601.2" fill="#666660" stroke="#1c1b19" stroke-width="0.9" stroke-linejoin="round" />
<polygon points="1653.8,480.6 1657.5,479 1701.9,526.2 1698.1,528.8" fill="#55524b" stroke="#1c1b19" stroke-width="0.7" stroke-linejoin="round" />
<polygon points="1698.1,528.8 1701.9,526.2 1672.5,648.1 1668.1,649.4" fill="#55524b" stroke="#1c1b19" stroke-width="0.7" stroke-linejoin="round" />
<circle cx="1661.2" cy="490" r="1.1" fill="#1c1b19" stroke="none" stroke-width="0.9"/>
<circle cx="1649.8" cy="506.2" r="1.1" fill="#1c1b19" stroke="none" stroke-width="0.9"/>
<circle cx="1690" cy="520.2" r="1.1" fill="#1c1b19" stroke="none" stroke-width="0.9"/>
<circle cx="1691" cy="550" r="1.1" fill="#1c1b19" stroke="none" stroke-width="0.9"/>
<circle cx="1632.2" cy="581.6" r="1.1" fill="#1c1b19" stroke="none" stroke-width="0.9"/>
<circle cx="1671.9" cy="626.2" r="1.1" fill="#1c1b19" stroke="none" stroke-width="0.9"/>
<path d="M378.8,320 L415.6,314 L428.1,348.1 L392.5,356.2 C378.8,357.5 365,345 366.9,335 C367.5,328.8 372.5,322.5 378.8,320 Z" fill="#4a4843" stroke="#1c1b19" stroke-width=".9" stroke-linejoin="round"/>
<path d="M383.1,322.5 C391.2,332.5 393.8,345 392.5,356.2" fill="none" stroke="#1c1b19" stroke-width=".8"/>
<path d="M382.8,324 C373.8,332.5 378.8,342.5 391.9,345.6" fill="none" stroke="#1c1b19" stroke-width=".8"/>
<path d="M367.5,340 C372.5,351.2 382.5,356.2 391.9,353.8" fill="none" stroke="#1c1b19" stroke-width=".7"/>
<path d="M459.4,299.4 L513.1,288.5 L531.9,329.8 L531.9,332.5 L478.1,344.8 L475,336.2 C476.2,322.5 468.8,311.2 461.2,305.6 Z" fill="#55524b" stroke="#1c1b19" stroke-width=".8"/>
<path d="M459.4,299.4 L513.1,288.5 L531.9,329.8 L475.6,340.6 C476.2,322.5 468.8,311.2 461.2,304 Z" fill="#8e897c" stroke="#1c1b19" stroke-width=".9"/>
<clipPath id="lidc"><path d="M459.4,299.4 L513.1,288.5 L531.9,329.8 L475.6,340.6 C476.2,322.5 468.8,311.2 461.2,304 Z"/></clipPath>
<g clip-path="url(#lidc)"><ellipse cx="485.6" cy="315.6" rx="36" ry="22.500" transform="rotate(-8 485.6 315.6)" fill="#a19b8d" stroke="#1c1b19" stroke-width=".8"/><ellipse cx="484.6" cy="315.1" rx="25" ry="15" transform="rotate(-8 484.6 315.1)" fill="#969184" stroke="#1c1b19" stroke-width=".8"/></g>
<polyline points="476.2,341.9 531.9,330.9" fill="none" stroke="#1c1b19" stroke-width="0.6" stroke-linejoin="round" stroke-linecap="round" />
<polygon points="599.4,271.2 620.6,311.9 621.2,327.5 600,286.9" fill="#5a5852" stroke="#1c1b19" stroke-width="0.8" stroke-linejoin="round" />
<polygon points="620.6,311.9 693.8,300 694.8,311.2 621.2,327.5" fill="#4c4a44" stroke="#1c1b19" stroke-width="0.8" stroke-linejoin="round" />
<polygon points="599.4,271.2 671.2,258.5 693.8,300 620.6,311.9" fill="#6f6c63" stroke="#1c1b19" stroke-width="0.9" stroke-linejoin="round" />
<clipPath id="trc"><polygon points="599.4,271.2 671.2,258.5 693.8,300 620.6,311.9"/></clipPath>
<g clip-path="url(#trc)"><ellipse cx="646.2" cy="285.6" rx="38" ry="20.500" transform="rotate(-7 646.2 285.6)" fill="#4d4b45" stroke="#1c1b19" stroke-width=".8"/><ellipse cx="647.2" cy="286.8" rx="33.500" ry="17" transform="rotate(-7 647.2 286.8)" fill="#979183" stroke="#1c1b19" stroke-width=".8"/></g>
<ellipse cx="608.5" cy="272.2" rx="3.8" ry="2.3" fill="#55524b" stroke="#1c1b19" stroke-width=".7"/>
<ellipse cx="627.8" cy="305.4" rx="3.6" ry="2.1" fill="#55524b" stroke="#1c1b19" stroke-width=".7"/>
<polyline points="602.5,272.8 622.5,310" fill="none" stroke="#1c1b19" stroke-width="0.7" stroke-linejoin="round" stroke-linecap="round" />
<polyline points="605,272.5 623.8,308.5" fill="none" stroke="#1c1b19" stroke-width="0.6" stroke-linejoin="round" stroke-linecap="round" />
<polyline points="638.8,308.5 692.5,298.8" fill="none" stroke="#3a3833" stroke-width="1.4" stroke-linejoin="round" stroke-linecap="round" />
<polyline points="673.1,263.8 691.2,296.9" fill="none" stroke="#1c1b19" stroke-width="0.7" stroke-linejoin="round" stroke-linecap="round" />
<polyline points="670,260 675,268.8" fill="none" stroke="#3a3833" stroke-width="1.2" stroke-linejoin="round" stroke-linecap="round" />
<path d="M564.1 385.6 L564.1 391.9 A6.9 2.8 0 0 0 577.9 391.9 L577.9 385.6 Z" fill="#343330" stroke="#1c1b19" stroke-width=".7"/>
<ellipse cx="571" cy="385.6" rx="6.9" ry="2.8" fill="#3a3936" stroke="#1c1b19" stroke-width=".7"/>
<path d="M564.2 379 L564.2 385 A5.5 2.5 0 0 0 575.2 385 L575.2 379 Z" fill="#3a3936" stroke="#1c1b19" stroke-width=".7"/>
<ellipse cx="569.8" cy="379" rx="5.5" ry="2.5" fill="#44433f" stroke="#1c1b19" stroke-width=".7"/>
<path d="M567.1 423.5 L567.1 431.9 A5.6 2.2 0 0 0 578.4 431.9 L578.4 423.5 Z" fill="#5e5b54" stroke="#1c1b19" stroke-width=".7"/>
<ellipse cx="572.8" cy="423.5" rx="5.6" ry="2.2" fill="#77746b" stroke="#1c1b19" stroke-width=".7"/>
<path d="M567.2 419.8 L567.2 424 A4.8 2 0 0 0 576.8 424 L576.8 419.8 Z" fill="#6b685f" stroke="#1c1b19" stroke-width=".7"/>
<ellipse cx="572" cy="419.8" rx="4.8" ry="2" fill="#9a958a" stroke="#1c1b19" stroke-width=".7"/>
<path d="M594.9 421.2 L594.9 428.1 A3.2 1.2 0 0 0 601.4 428.1 L601.4 421.2 Z" fill="#4c4a44" stroke="#1c1b19" stroke-width=".7"/>
<ellipse cx="598.1" cy="421.2" rx="3.2" ry="1.2" fill="#6b685f" stroke="#1c1b19" stroke-width=".7"/>
<path d="M594.5 415.4 L594.5 421.2 A2.2 1 0 0 0 599 421.2 L599 415.4 Z" fill="#55524b" stroke="#1c1b19" stroke-width=".7"/>
<ellipse cx="596.8" cy="415.4" rx="2.2" ry="1" fill="#77746b" stroke="#1c1b19" stroke-width=".7"/>
<polygon points="527.2,381.2 528.5,381 529,389.4 530.6,389 530.8,393.1 528.2,394" fill="#45433e" stroke="#1c1b19" stroke-width="0.8" stroke-linejoin="round" />
<polygon points="532.2,393.1 534.4,392.5 534.8,398.1 536.9,397.8 537.5,405.6 533.8,406.5" fill="#45433e" stroke="#1c1b19" stroke-width="0.8" stroke-linejoin="round" />
<polygon points="538.5,407.5 540.6,406.9 543.8,415 543.5,421.9 540.6,422.5 538.8,415" fill="#45433e" stroke="#1c1b19" stroke-width="0.8" stroke-linejoin="round" />
<polygon points="544,420 546.5,419.5 550.4,430 550.4,436.2 547.2,437.2 545,430" fill="#45433e" stroke="#1c1b19" stroke-width="0.8" stroke-linejoin="round" />
<clipPath id="kbc"><polygon points="533.8,642 540,635 546.2,623.8 553.8,622 557.5,620 566.2,620 570,617 577.5,615 585,615 593.8,616.2 595,612.5 601.2,610 608.8,614.2 676.2,779.2 676.2,783.8 596.2,803.8 593,802.5 580.5,765 580.5,762.5 588.8,760 577,722.5 567,727.5 564.5,725 535,646.2"/></clipPath>
<polygon points="533.8,642 540,635 546.2,623.8 553.8,622 557.5,620 566.2,620 570,617 577.5,615 585,615 593.8,616.2 595,612.5 601.2,610 608.8,614.2 676.2,779.2 676.2,783.8 596.2,803.8 593,802.5 580.5,765 580.5,762.5 588.8,760 577,722.5 567,727.5 564.5,725 535,646.2" fill="#918c80" stroke="#1c1b19" stroke-width="1" stroke-linejoin="round"/>
<g clip-path="url(#kbc)"><polygon points="527,618.5 579.9,605 652,784.6 597,801.2" fill="#2b2a27" /><polygon points="585,603.7 598.7,600.2 657.2,744 643.2,748.1" fill="#2b2a27" /><polygon points="533.8,631.2 542.7,628.8 544.6,633.8 535.7,636.1" fill="#8f8a7d" stroke="#1c1b19" stroke-width=".45"/><polygon points="535.7,636.1 544.6,633.8 545.4,637.7 536.4,640" fill="#70706d"/><polygon points="544.1,628.5 553.1,626.2 555,631.1 546.1,633.5" fill="#8f8a7d" stroke="#1c1b19" stroke-width=".45"/><polygon points="546.1,633.5 555,631.1 555.7,635 546.8,637.3" fill="#70706d"/><polygon points="554.5,625.8 563.4,623.5 565.3,628.4 556.4,630.8" fill="#8f8a7d" stroke="#1c1b19" stroke-width=".45"/><polygon points="556.4,630.8 565.3,628.4 566,632.3 557.1,634.6" fill="#70706d"/><polygon points="564.8,623.1 573.7,620.8 575.7,625.7 566.7,628.1" fill="#8f8a7d" stroke="#1c1b19" stroke-width=".45"/><polygon points="566.7,628.1 575.7,625.7 576.4,629.6 567.5,631.9" fill="#70706d"/><polygon points="575.1,620.5 584,618.1 586,623.1 577.1,625.4" fill="#8f8a7d" stroke="#1c1b19" stroke-width=".45"/><polygon points="577.1,625.4 586,623.1 586.7,626.9 577.8,629.2" fill="#70706d"/><polygon points="592.6,615.9 603.1,613.2 605.1,618.1 594.5,620.8" fill="#8f8a7d" stroke="#1c1b19" stroke-width=".45"/><polygon points="594.5,620.8 605.1,618.1 605.9,621.9 595.3,624.6" fill="#70706d"/><polygon points="536.9,639.2 545.8,636.9 547.7,641.9 538.8,644.2" fill="#8f8a7d" stroke="#1c1b19" stroke-width=".45"/><polygon points="538.8,644.2 547.7,641.9 548.5,645.7 539.5,648" fill="#70706d"/><polygon points="547.2,636.5 556.2,634.2 558.1,639.1 549.2,641.5" fill="#8f8a7d" stroke="#1c1b19" stroke-width=".45"/><polygon points="549.2,641.5 558.1,639.1 558.8,643 549.9,645.3" fill="#70706d"/><polygon points="557.6,633.8 566.5,631.5 568.5,636.4 559.5,638.8" fill="#8f8a7d" stroke="#1c1b19" stroke-width=".45"/><polygon points="559.5,638.8 568.5,636.4 569.2,640.2 560.2,642.6" fill="#70706d"/><polygon points="567.9,631.1 576.9,628.8 578.8,633.7 569.9,636" fill="#8f8a7d" stroke="#1c1b19" stroke-width=".45"/><polygon points="569.9,636 578.8,633.7 579.5,637.5 570.6,639.9" fill="#70706d"/><polygon points="578.3,628.4 587.2,626.1 589.2,631 580.2,633.3" fill="#8f8a7d" stroke="#1c1b19" stroke-width=".45"/><polygon points="580.2,633.3 589.2,631 589.9,634.8 581,637.2" fill="#70706d"/><polygon points="595.8,623.8 606.3,621.1 608.3,626 597.7,628.7" fill="#8f8a7d" stroke="#1c1b19" stroke-width=".45"/><polygon points="597.7,628.7 608.3,626 609.1,629.8 598.5,632.5" fill="#70706d"/><polygon points="540,647.3 548.9,644.9 550.9,649.9 541.9,652.2" fill="#8f8a7d" stroke="#1c1b19" stroke-width=".45"/><polygon points="541.9,652.2 550.9,649.9 551.6,653.7 542.6,656.1" fill="#70706d"/><polygon points="550.3,644.5 559.3,642.2 561.2,647.1 552.3,649.5" fill="#8f8a7d" stroke="#1c1b19" stroke-width=".45"/><polygon points="552.3,649.5 561.2,647.1 561.9,651 553,653.4" fill="#70706d"/><polygon points="560.7,641.8 569.7,639.4 571.6,644.4 562.6,646.8" fill="#8f8a7d" stroke="#1c1b19" stroke-width=".45"/><polygon points="562.6,646.8 571.6,644.4 572.3,648.2 563.4,650.6" fill="#70706d"/><polygon points="571.1,639.1 580,636.7 582,641.6 573,644" fill="#8f8a7d" stroke="#1c1b19" stroke-width=".45"/><polygon points="573,644 582,641.6 582.7,645.5 573.7,647.8" fill="#70706d"/><polygon points="581.4,636.3 590.4,634 592.4,638.9 583.4,641.3" fill="#8f8a7d" stroke="#1c1b19" stroke-width=".45"/><polygon points="583.4,641.3 592.4,638.9 593.1,642.7 584.1,645.1" fill="#70706d"/><polygon points="598.9,631.7 609.5,628.9 611.5,633.8 600.9,636.6" fill="#8f8a7d" stroke="#1c1b19" stroke-width=".45"/><polygon points="600.9,636.6 611.5,633.8 612.3,637.6 601.7,640.4" fill="#70706d"/><polygon points="543.1,655.3 552,652.9 554,657.9 545,660.3" fill="#8f8a7d" stroke="#1c1b19" stroke-width=".45"/><polygon points="545,660.3 554,657.9 554.7,661.8 545.7,664.2" fill="#70706d"/><polygon points="553.4,652.6 562.4,650.2 564.3,655.1 555.4,657.5" fill="#8f8a7d" stroke="#1c1b19" stroke-width=".45"/><polygon points="555.4,657.5 564.3,655.1 565.1,659 556.1,661.4" fill="#70706d"/><polygon points="563.8,649.8 572.8,647.4 574.7,652.4 565.8,654.8" fill="#8f8a7d" stroke="#1c1b19" stroke-width=".45"/><polygon points="565.8,654.8 574.7,652.4 575.5,656.2 566.5,658.6" fill="#70706d"/><polygon points="574.2,647 583.2,644.7 585.1,649.6 576.2,652" fill="#8f8a7d" stroke="#1c1b19" stroke-width=".45"/><polygon points="576.2,652 585.1,649.6 585.9,653.4 576.9,655.8" fill="#70706d"/><polygon points="584.6,644.3 593.6,641.9 595.5,646.8 586.6,649.2" fill="#8f8a7d" stroke="#1c1b19" stroke-width=".45"/><polygon points="586.6,649.2 595.5,646.8 596.3,650.6 587.3,653" fill="#70706d"/><polygon points="602.1,639.6 612.8,636.8 614.7,641.7 604.1,644.5" fill="#8f8a7d" stroke="#1c1b19" stroke-width=".45"/><polygon points="604.1,644.5 614.7,641.7 615.5,645.5 604.8,648.3" fill="#70706d"/><polygon points="546.2,663.4 555.1,661 557.1,665.9 548.1,668.4" fill="#8f8a7d" stroke="#1c1b19" stroke-width=".45"/><polygon points="548.1,668.4 557.1,665.9 557.8,669.8 548.8,672.2" fill="#70706d"/><polygon points="556.6,660.6 565.5,658.2 567.5,663.1 558.5,665.6" fill="#8f8a7d" stroke="#1c1b19" stroke-width=".45"/><polygon points="558.5,665.6 567.5,663.1 568.2,667 559.2,669.4" fill="#70706d"/><polygon points="567,657.8 575.9,655.4 577.9,660.3 568.9,662.8" fill="#8f8a7d" stroke="#1c1b19" stroke-width=".45"/><polygon points="568.9,662.8 577.9,660.3 578.6,664.2 569.6,666.6" fill="#70706d"/><polygon points="577.4,655 586.3,652.6 588.3,657.5 579.3,660" fill="#8f8a7d" stroke="#1c1b19" stroke-width=".45"/><polygon points="579.3,660 588.3,657.5 589,661.4 580,663.8" fill="#70706d"/><polygon points="587.8,652.2 596.7,649.8 598.7,654.7 589.7,657.2" fill="#8f8a7d" stroke="#1c1b19" stroke-width=".45"/><polygon points="589.7,657.2 598.7,654.7 599.4,658.6 590.4,661" fill="#70706d"/><polygon points="605.3,647.5 616,644.7 617.9,649.6 607.3,652.4" fill="#8f8a7d" stroke="#1c1b19" stroke-width=".45"/><polygon points="607.3,652.4 617.9,649.6 618.7,653.4 608,656.2" fill="#70706d"/><polygon points="549.2,671.4 558.2,669 560.2,674 551.2,676.4" fill="#8f8a7d" stroke="#1c1b19" stroke-width=".45"/><polygon points="551.2,676.4 560.2,674 560.9,677.8 551.9,680.3" fill="#70706d"/><polygon points="559.7,668.6 568.7,666.2 570.6,671.1 561.6,673.6" fill="#8f8a7d" stroke="#1c1b19" stroke-width=".45"/><polygon points="561.6,673.6 570.6,671.1 571.3,675 562.3,677.4" fill="#70706d"/><polygon points="570.1,665.8 579.1,663.4 581,668.3 572,670.8" fill="#8f8a7d" stroke="#1c1b19" stroke-width=".45"/><polygon points="572,670.8 581,668.3 581.7,672.1 572.7,674.6" fill="#70706d"/><polygon points="580.5,663 589.5,660.6 591.4,665.5 582.4,667.9" fill="#8f8a7d" stroke="#1c1b19" stroke-width=".45"/><polygon points="582.4,667.9 591.4,665.5 592.2,669.3 583.2,671.8" fill="#70706d"/><polygon points="590.9,660.2 599.9,657.8 601.9,662.7 592.9,665.1" fill="#8f8a7d" stroke="#1c1b19" stroke-width=".45"/><polygon points="592.9,665.1 601.9,662.7 602.6,666.5 593.6,668.9" fill="#70706d"/><polygon points="608.5,655.4 619.2,652.6 621.1,657.4 610.5,660.3" fill="#8f8a7d" stroke="#1c1b19" stroke-width=".45"/><polygon points="610.5,660.3 621.1,657.4 621.9,661.3 611.2,664.1" fill="#70706d"/><polygon points="552.3,679.5 561.3,677 563.3,682 554.2,684.5" fill="#8f8a7d" stroke="#1c1b19" stroke-width=".45"/><polygon points="554.2,684.5 563.3,682 564,685.8 555,688.3" fill="#70706d"/><polygon points="562.8,676.6 571.8,674.2 573.7,679.1 564.7,681.6" fill="#8f8a7d" stroke="#1c1b19" stroke-width=".45"/><polygon points="564.7,681.6 573.7,679.1 574.4,683 565.4,685.4" fill="#70706d"/><polygon points="573.2,673.8 582.2,671.3 584.2,676.3 575.1,678.8" fill="#8f8a7d" stroke="#1c1b19" stroke-width=".45"/><polygon points="575.1,678.8 584.2,676.3 584.9,680.1 575.9,682.6" fill="#70706d"/><polygon points="583.6,671 592.6,668.5 594.6,673.4 585.6,675.9" fill="#8f8a7d" stroke="#1c1b19" stroke-width=".45"/><polygon points="585.6,675.9 594.6,673.4 595.3,677.3 586.3,679.7" fill="#70706d"/><polygon points="594.1,668.1 603.1,665.7 605,670.6 596,673" fill="#8f8a7d" stroke="#1c1b19" stroke-width=".45"/><polygon points="596,673 605,670.6 605.8,674.4 596.7,676.9" fill="#70706d"/><polygon points="611.7,663.3 622.4,660.4 624.4,665.3 613.7,668.2" fill="#8f8a7d" stroke="#1c1b19" stroke-width=".45"/><polygon points="613.7,668.2 624.4,665.3 625.1,669.1 614.4,672" fill="#70706d"/><polygon points="555.4,687.5 564.4,685 566.4,690 557.3,692.5" fill="#8f8a7d" stroke="#1c1b19" stroke-width=".45"/><polygon points="557.3,692.5 566.4,690 567.1,693.9 558,696.4" fill="#70706d"/><polygon points="565.9,684.7 574.9,682.2 576.8,687.1 567.8,689.6" fill="#8f8a7d" stroke="#1c1b19" stroke-width=".45"/><polygon points="567.8,689.6 576.8,687.1 577.5,691 568.5,693.5" fill="#70706d"/><polygon points="576.3,681.8 585.3,679.3 587.3,684.3 578.3,686.8" fill="#8f8a7d" stroke="#1c1b19" stroke-width=".45"/><polygon points="578.3,686.8 587.3,684.3 588,688.1 579,690.6" fill="#70706d"/><polygon points="586.8,678.9 595.8,676.5 597.8,681.4 588.7,683.9" fill="#8f8a7d" stroke="#1c1b19" stroke-width=".45"/><polygon points="588.7,683.9 597.8,681.4 598.5,685.2 589.4,687.7" fill="#70706d"/><polygon points="597.2,676.1 606.2,673.6 608.2,678.5 599.2,681" fill="#8f8a7d" stroke="#1c1b19" stroke-width=".45"/><polygon points="599.2,681 608.2,678.5 608.9,682.3 599.9,684.8" fill="#70706d"/><polygon points="614.9,671.2 625.6,668.3 627.6,673.2 616.9,676.1" fill="#8f8a7d" stroke="#1c1b19" stroke-width=".45"/><polygon points="616.9,676.1 627.6,673.2 628.3,677 617.6,679.9" fill="#70706d"/><polygon points="558.5,695.6 567.5,693.1 569.5,698.1 560.4,700.6" fill="#8f8a7d" stroke="#1c1b19" stroke-width=".45"/><polygon points="560.4,700.6 569.5,698.1 570.2,701.9 561.1,704.4" fill="#70706d"/><polygon points="569,692.7 578,690.2 580,695.1 570.9,697.7" fill="#8f8a7d" stroke="#1c1b19" stroke-width=".45"/><polygon points="570.9,697.7 580,695.1 580.7,699 571.6,701.5" fill="#70706d"/><polygon points="579.4,689.8 588.5,687.3 590.4,692.2 581.4,694.7" fill="#8f8a7d" stroke="#1c1b19" stroke-width=".45"/><polygon points="581.4,694.7 590.4,692.2 591.2,696.1 582.1,698.6" fill="#70706d"/><polygon points="589.9,686.9 599,684.4 600.9,689.3 591.9,691.8" fill="#8f8a7d" stroke="#1c1b19" stroke-width=".45"/><polygon points="591.9,691.8 600.9,689.3 601.6,693.2 592.6,695.7" fill="#70706d"/><polygon points="600.4,684 609.4,681.5 611.4,686.4 602.3,688.9" fill="#8f8a7d" stroke="#1c1b19" stroke-width=".45"/><polygon points="602.3,688.9 611.4,686.4 612.1,690.3 603.1,692.8" fill="#70706d"/><polygon points="618.1,679.1 628.8,676.2 630.8,681.1 620,684" fill="#8f8a7d" stroke="#1c1b19" stroke-width=".45"/><polygon points="620,684 630.8,681.1 631.5,684.9 620.8,687.8" fill="#70706d"/><polygon points="561.6,703.6 570.7,701.1 572.6,706.1 563.5,708.6" fill="#8f8a7d" stroke="#1c1b19" stroke-width=".45"/><polygon points="563.5,708.6 572.6,706.1 573.3,709.9 564.2,712.5" fill="#70706d"/><polygon points="572.1,700.7 581.1,698.2 583.1,703.1 574,705.7" fill="#8f8a7d" stroke="#1c1b19" stroke-width=".45"/><polygon points="574,705.7 583.1,703.1 583.8,707 574.7,709.5" fill="#70706d"/><polygon points="582.6,697.8 591.6,695.3 593.6,700.2 584.5,702.7" fill="#8f8a7d" stroke="#1c1b19" stroke-width=".45"/><polygon points="584.5,702.7 593.6,700.2 594.3,704 585.2,706.6" fill="#70706d"/><polygon points="593.1,694.9 602.1,692.4 604.1,697.3 595,699.8" fill="#8f8a7d" stroke="#1c1b19" stroke-width=".45"/><polygon points="595,699.8 604.1,697.3 604.8,701.1 595.7,703.6" fill="#70706d"/><polygon points="603.5,692 612.6,689.4 614.6,694.4 605.5,696.9" fill="#8f8a7d" stroke="#1c1b19" stroke-width=".45"/><polygon points="605.5,696.9 614.6,694.4 615.3,698.2 606.2,700.7" fill="#70706d"/><polygon points="621.3,687 632,684 634,688.9 623.2,691.9" fill="#8f8a7d" stroke="#1c1b19" stroke-width=".45"/><polygon points="623.2,691.9 634,688.9 634.7,692.7 624,695.7" fill="#70706d"/><polygon points="564.7,711.7 573.8,709.1 575.7,714.1 566.6,716.7" fill="#8f8a7d" stroke="#1c1b19" stroke-width=".45"/><polygon points="566.6,716.7 575.7,714.1 576.4,718 567.3,720.5" fill="#70706d"/><polygon points="575.2,708.7 584.3,706.2 586.2,711.1 577.1,713.7" fill="#8f8a7d" stroke="#1c1b19" stroke-width=".45"/><polygon points="577.1,713.7 586.2,711.1 586.9,715 577.8,717.5" fill="#70706d"/><polygon points="585.7,705.8 594.8,703.2 596.7,708.2 587.6,710.7" fill="#8f8a7d" stroke="#1c1b19" stroke-width=".45"/><polygon points="587.6,710.7 596.7,708.2 597.4,712 588.3,714.6" fill="#70706d"/><polygon points="596.2,702.8 605.3,700.3 607.2,705.2 598.1,707.8" fill="#8f8a7d" stroke="#1c1b19" stroke-width=".45"/><polygon points="598.1,707.8 607.2,705.2 607.9,709.1 598.9,711.6" fill="#70706d"/><polygon points="606.7,699.9 615.8,697.4 617.7,702.3 608.7,704.8" fill="#8f8a7d" stroke="#1c1b19" stroke-width=".45"/><polygon points="608.7,704.8 617.7,702.3 618.5,706.1 609.4,708.7" fill="#70706d"/><polygon points="624.4,694.9 635.2,691.9 637.2,696.8 626.4,699.8" fill="#8f8a7d" stroke="#1c1b19" stroke-width=".45"/><polygon points="626.4,699.8 637.2,696.8 637.9,700.6 627.1,703.6" fill="#70706d"/><polygon points="567.8,719.7 576.9,717.2 578.8,722.1 569.7,724.7" fill="#8f8a7d" stroke="#1c1b19" stroke-width=".45"/><polygon points="569.7,724.7 578.8,722.1 579.5,726 570.4,728.6" fill="#70706d"/><polygon points="578.3,716.8 587.4,714.2 589.3,719.2 580.2,721.7" fill="#8f8a7d" stroke="#1c1b19" stroke-width=".45"/><polygon points="580.2,721.7 589.3,719.2 590,723 580.9,725.6" fill="#70706d"/><polygon points="588.8,713.8 597.9,711.2 599.8,716.2 590.7,718.7" fill="#8f8a7d" stroke="#1c1b19" stroke-width=".45"/><polygon points="590.7,718.7 599.8,716.2 600.6,720 591.5,722.6" fill="#70706d"/><polygon points="599.3,710.8 608.4,708.3 610.4,713.2 601.3,715.8" fill="#8f8a7d" stroke="#1c1b19" stroke-width=".45"/><polygon points="601.3,715.8 610.4,713.2 611.1,717 602,719.6" fill="#70706d"/><polygon points="609.9,707.8 618.9,705.3 620.9,710.2 611.8,712.8" fill="#8f8a7d" stroke="#1c1b19" stroke-width=".45"/><polygon points="611.8,712.8 620.9,710.2 621.6,714 612.5,716.6" fill="#70706d"/><polygon points="627.6,702.8 638.4,699.8 640.4,704.7 629.6,707.7" fill="#8f8a7d" stroke="#1c1b19" stroke-width=".45"/><polygon points="629.6,707.7 640.4,704.7 641.1,708.5 630.3,711.5" fill="#70706d"/><polygon points="570.9,727.8 580,725.2 581.9,730.2 572.8,732.8" fill="#8f8a7d" stroke="#1c1b19" stroke-width=".45"/><polygon points="572.8,732.8 581.9,730.2 582.6,734 573.5,736.6" fill="#70706d"/><polygon points="581.4,724.8 590.5,722.2 592.4,727.2 583.3,729.8" fill="#8f8a7d" stroke="#1c1b19" stroke-width=".45"/><polygon points="583.3,729.8 592.4,727.2 593.2,731 584,733.6" fill="#70706d"/><polygon points="591.9,721.8 601,719.2 603,724.1 593.9,726.7" fill="#8f8a7d" stroke="#1c1b19" stroke-width=".45"/><polygon points="593.9,726.7 603,724.1 603.7,728 594.6,730.6" fill="#70706d"/><polygon points="602.5,718.8 611.6,716.2 613.5,721.1 604.4,723.7" fill="#8f8a7d" stroke="#1c1b19" stroke-width=".45"/><polygon points="604.4,723.7 613.5,721.1 614.3,725 605.1,727.6" fill="#70706d"/><polygon points="613,715.8 622.1,713.2 624.1,718.1 615,720.7" fill="#8f8a7d" stroke="#1c1b19" stroke-width=".45"/><polygon points="615,720.7 624.1,718.1 624.8,721.9 615.7,724.5" fill="#70706d"/><polygon points="630.8,710.7 641.6,707.7 643.6,712.5 632.8,715.6" fill="#8f8a7d" stroke="#1c1b19" stroke-width=".45"/><polygon points="632.8,715.6 643.6,712.5 644.3,716.4 633.5,719.4" fill="#70706d"/><polygon points="573.9,735.8 583.1,733.2 585,738.2 575.9,740.8" fill="#8f8a7d" stroke="#1c1b19" stroke-width=".45"/><polygon points="575.9,740.8 585,738.2 585.7,742 576.6,744.7" fill="#70706d"/><polygon points="584.5,732.8 593.6,730.2 595.6,735.2 586.4,737.8" fill="#8f8a7d" stroke="#1c1b19" stroke-width=".45"/><polygon points="586.4,737.8 595.6,735.2 596.3,739 587.1,741.6" fill="#70706d"/><polygon points="595.1,729.8 604.2,727.2 606.1,732.1 597,734.7" fill="#8f8a7d" stroke="#1c1b19" stroke-width=".45"/><polygon points="597,734.7 606.1,732.1 606.8,735.9 597.7,738.6" fill="#70706d"/><polygon points="605.6,726.8 614.7,724.1 616.7,729.1 607.6,731.7" fill="#8f8a7d" stroke="#1c1b19" stroke-width=".45"/><polygon points="607.6,731.7 616.7,729.1 617.4,732.9 608.3,735.5" fill="#70706d"/><polygon points="616.2,723.7 625.3,721.1 627.3,726 618.1,728.7" fill="#8f8a7d" stroke="#1c1b19" stroke-width=".45"/><polygon points="618.1,728.7 627.3,726 628,729.9 618.9,732.5" fill="#70706d"/><polygon points="634,718.6 644.8,715.5 646.8,720.4 636,723.5" fill="#8f8a7d" stroke="#1c1b19" stroke-width=".45"/><polygon points="636,723.5 646.8,720.4 647.5,724.2 636.7,727.3" fill="#70706d"/><polygon points="577,743.9 586.2,741.2 588.1,746.2 579,748.9" fill="#8f8a7d" stroke="#1c1b19" stroke-width=".45"/><polygon points="579,748.9 588.1,746.2 588.8,750.1 579.7,752.7" fill="#70706d"/><polygon points="587.6,740.8 596.7,738.2 598.7,743.2 589.5,745.8" fill="#8f8a7d" stroke="#1c1b19" stroke-width=".45"/><polygon points="589.5,745.8 598.7,743.2 599.4,747 590.2,749.6" fill="#70706d"/><polygon points="598.2,737.8 607.3,735.1 609.3,740.1 600.1,742.7" fill="#8f8a7d" stroke="#1c1b19" stroke-width=".45"/><polygon points="600.1,742.7 609.3,740.1 610,743.9 600.8,746.6" fill="#70706d"/><polygon points="608.8,734.7 617.9,732.1 619.8,737 610.7,739.7" fill="#8f8a7d" stroke="#1c1b19" stroke-width=".45"/><polygon points="610.7,739.7 619.8,737 620.6,740.9 611.4,743.5" fill="#70706d"/><polygon points="619.3,731.7 628.5,729 630.4,734 621.3,736.6" fill="#8f8a7d" stroke="#1c1b19" stroke-width=".45"/><polygon points="621.3,736.6 630.4,734 631.2,737.8 622,740.4" fill="#70706d"/><polygon points="637.2,726.5 648,723.4 650,728.3 639.2,731.4" fill="#8f8a7d" stroke="#1c1b19" stroke-width=".45"/><polygon points="639.2,731.4 650,728.3 650.7,732.1 639.9,735.2" fill="#70706d"/><polygon points="580.1,751.9 589.3,749.3 591.2,754.3 582,756.9" fill="#8f8a7d" stroke="#1c1b19" stroke-width=".45"/><polygon points="582,756.9 591.2,754.3 591.9,758.1 582.8,760.8" fill="#70706d"/><polygon points="590.7,748.9 599.9,746.2 601.8,751.2 592.6,753.8" fill="#8f8a7d" stroke="#1c1b19" stroke-width=".45"/><polygon points="592.6,753.8 601.8,751.2 602.5,755 593.4,757.7" fill="#70706d"/><polygon points="599.9,746.5 611.3,743.2 614.5,751.5 603.1,754.8" fill="#918c80" /><polygon points="610.5,743.4 621.8,740.1 625.1,748.4 613.7,751.7" fill="#918c80" /><polygon points="622.5,739.6 631.6,737 633.6,741.9 624.4,744.6" fill="#8f8a7d" stroke="#1c1b19" stroke-width=".45"/><polygon points="624.4,744.6 633.6,741.9 634.3,745.7 625.2,748.4" fill="#70706d"/><polygon points="640.4,734.4 651.2,731.3 653.2,736.2 642.4,739.3" fill="#8f8a7d" stroke="#1c1b19" stroke-width=".45"/><polygon points="642.4,739.3 653.2,736.2 653.9,740 643.1,743.1" fill="#70706d"/><polygon points="583.2,760 592.4,757.3 594.3,762.3 585.1,765" fill="#8f8a7d" stroke="#1c1b19" stroke-width=".45"/><polygon points="585.1,765 594.3,762.3 595,766.1 585.8,768.8" fill="#70706d"/><polygon points="593.8,756.9 603,754.2 604.9,759.2 595.7,761.9" fill="#8f8a7d" stroke="#1c1b19" stroke-width=".45"/><polygon points="595.7,761.9 604.9,759.2 605.6,763 596.5,765.7" fill="#70706d"/><polygon points="603,754.5 614.4,751.2 617.7,759.5 606.2,762.8" fill="#918c80" /><polygon points="615,750.7 624.2,748 626.2,752.9 617,755.6" fill="#8f8a7d" stroke="#1c1b19" stroke-width=".45"/><polygon points="617,755.6 626.2,752.9 626.9,756.7 617.7,759.4" fill="#70706d"/><polygon points="625.6,747.6 634.8,744.9 636.8,749.8 627.6,752.5" fill="#8f8a7d" stroke="#1c1b19" stroke-width=".45"/><polygon points="627.6,752.5 636.8,749.8 637.5,753.6 628.3,756.3" fill="#70706d"/><polygon points="586.3,768 595.5,765.3 597.4,770.3 588.2,773" fill="#8f8a7d" stroke="#1c1b19" stroke-width=".45"/><polygon points="588.2,773 597.4,770.3 598.1,774.2 588.9,776.9" fill="#70706d"/><polygon points="596.9,764.9 606.1,762.2 608,767.2 598.9,769.9" fill="#8f8a7d" stroke="#1c1b19" stroke-width=".45"/><polygon points="598.9,769.9 608,767.2 608.8,771 599.6,773.7" fill="#70706d"/><polygon points="606.1,762.5 617.5,759.1 620.8,767.4 609.4,770.8" fill="#918c80" /><polygon points="616.7,759.4 628.2,756 631.4,764.3 620,767.7" fill="#918c80" /><polygon points="628.8,755.5 638,752.8 639.9,757.7 630.8,760.4" fill="#8f8a7d" stroke="#1c1b19" stroke-width=".45"/><polygon points="630.8,760.4 639.9,757.7 640.7,761.5 631.5,764.3" fill="#70706d"/><polygon points="589.4,776.1 598.6,773.4 600.5,778.3 591.3,781.1" fill="#8f8a7d" stroke="#1c1b19" stroke-width=".45"/><polygon points="591.3,781.1 600.5,778.3 601.2,782.2 592,784.9" fill="#70706d"/><polygon points="600,772.9 609.2,770.2 611.2,775.2 602,777.9" fill="#8f8a7d" stroke="#1c1b19" stroke-width=".45"/><polygon points="602,777.9 611.2,775.2 611.9,779 602.7,781.7" fill="#70706d"/><polygon points="610.7,769.8 619.9,767 621.8,772 612.6,774.7" fill="#8f8a7d" stroke="#1c1b19" stroke-width=".45"/><polygon points="612.6,774.7 621.8,772 622.5,775.8 613.3,778.6" fill="#70706d"/><polygon points="621.3,766.6 630.5,763.9 632.5,768.8 623.3,771.6" fill="#8f8a7d" stroke="#1c1b19" stroke-width=".45"/><polygon points="623.3,771.6 632.5,768.8 633.2,772.6 624,775.4" fill="#70706d"/><polygon points="632,763.5 641.1,760.7 643.1,765.6 633.9,768.4" fill="#8f8a7d" stroke="#1c1b19" stroke-width=".45"/><polygon points="633.9,768.4 643.1,765.6 643.8,769.5 634.6,772.2" fill="#70706d"/><polygon points="592.5,784.1 601.7,781.4 603.6,786.4 594.4,789.1" fill="#8f8a7d" stroke="#1c1b19" stroke-width=".45"/><polygon points="594.4,789.1 603.6,786.4 604.3,790.2 595.1,793" fill="#70706d"/><polygon points="603.1,781 612.3,778.2 614.3,783.2 605.1,785.9" fill="#8f8a7d" stroke="#1c1b19" stroke-width=".45"/><polygon points="605.1,785.9 614.3,783.2 615,787 605.8,789.8" fill="#70706d"/><polygon points="613.8,777.8 623,775 624.9,780 615.7,782.7" fill="#8f8a7d" stroke="#1c1b19" stroke-width=".45"/><polygon points="615.7,782.7 624.9,780 625.7,783.8 616.5,786.6" fill="#70706d"/><polygon points="624.5,774.6 633.7,771.8 635.6,776.8 626.4,779.5" fill="#8f8a7d" stroke="#1c1b19" stroke-width=".45"/><polygon points="626.4,779.5 635.6,776.8 636.3,780.6 627.1,783.4" fill="#70706d"/><polygon points="635.1,771.4 644.3,768.7 646.3,773.6 637.1,776.3" fill="#8f8a7d" stroke="#1c1b19" stroke-width=".45"/><polygon points="637.1,776.3 646.3,773.6 647,777.4 637.8,780.2" fill="#70706d"/><polygon points="595.6,792.2 604.8,789.4 606.7,794.4 597.5,797.2" fill="#8f8a7d" stroke="#1c1b19" stroke-width=".45"/><polygon points="597.5,797.2 606.7,794.4 607.4,798.2 598.2,801" fill="#70706d"/><polygon points="606.2,789 615.5,786.2 617.4,791.2 608.2,794" fill="#8f8a7d" stroke="#1c1b19" stroke-width=".45"/><polygon points="608.2,794 617.4,791.2 618.1,795 608.9,797.8" fill="#70706d"/><polygon points="616.9,785.8 626.1,783 628.1,787.9 618.9,790.7" fill="#8f8a7d" stroke="#1c1b19" stroke-width=".45"/><polygon points="618.9,790.7 628.1,787.9 628.8,791.8 619.6,794.6" fill="#70706d"/><polygon points="627.6,782.6 636.8,779.8 638.8,784.7 629.5,787.5" fill="#8f8a7d" stroke="#1c1b19" stroke-width=".45"/><polygon points="629.5,787.5 638.8,784.7 639.5,788.5 630.3,791.3" fill="#70706d"/><polygon points="638.3,779.3 647.5,776.6 649.5,781.5 640.2,784.3" fill="#8f8a7d" stroke="#1c1b19" stroke-width=".45"/><polygon points="640.2,784.3 649.5,781.5 650.2,785.3 641,788.1" fill="#70706d"/></g>
<polygon points="596.2,803.8 676.2,783.8 676.2,779.2 595,799.5" fill="#55524b" stroke="#1c1b19" stroke-width="0.7" stroke-linejoin="round" />
<polygon points="1851.9,241.9 1895,228.7 1901,234.7 1856.7,247.8" fill="#000" opacity=".10" filter="url(#sh2)"/>
<polyline points="1832.7,170.6 1837.3,211.9" fill="none" stroke="#4646ff" stroke-width="1.6" stroke-linejoin="round" stroke-linecap="round" />
<polyline points="1837.3,211.9 1853.7,251.4" fill="none" stroke="#f27a7a" stroke-width="1.6" stroke-linejoin="round" stroke-linecap="round" />
<polygon points="1834.5,175.9 1850.1,205.7 1851.3,241.3 1837.3,211.9" fill="rgba(225,225,225,.6)" stroke="#8a8a8a" stroke-width="0.8" stroke-linejoin="round" stroke-dasharray="3 2"/>
<polygon points="1834.5,175.9 1876.5,167.3 1898.6,194.5 1850.1,205.7" fill="rgba(238,238,238,.65)" stroke="#8a8a8a" stroke-width="0.8" stroke-linejoin="round" stroke-dasharray="3 2"/>
<polygon points="1850.1,205.7 1898.6,194.5 1895,228.1 1851.3,241.3" fill="rgba(230,230,230,.65)" stroke="#8a8a8a" stroke-width="0.8" stroke-linejoin="round" stroke-dasharray="3 2"/>
<text x="1831.3" y="167.8" font-size="13" fill="#5b5bff" text-anchor="middle" font-family="Liberation Sans,sans-serif">Z</text>
<text x="1854.9" y="259.8" font-size="12" fill="#f27a7a" text-anchor="middle" font-family="Liberation Sans,sans-serif">X</text>
<text transform="matrix(.39 .74 -1.05 .22 1863.9 187.3)" font-size="16" fill="#8d939b" text-anchor="middle" font-family="Liberation Sans,Noto Sans CJK JP,sans-serif" dy="5.500">上</text>
<text transform="matrix(1.15 -.265 .03 .85 1873.5 217.9)" font-size="20" fill="#8d939b" text-anchor="middle" font-family="Liberation Sans,Noto Sans CJK JP,sans-serif" dy="7">右</text>
<text transform="matrix(.32 .62 -.03 1 1843.3 210.7)" font-size="13" fill="#a0a4aa" text-anchor="middle" font-family="Liberation Sans,Noto Sans CJK JP,sans-serif" dy="4">前</text>
</svg></div>
<!-- title bar -->
<div class="a" style="left:8px;top:0;width:1920px;height:23px;background:#fff"></div>
<svg class="a" style="left:10px;top:2px" width="16" height="18" viewBox="0 0 16 18"><path d="M1.5 3.2 L4 1 H13 a1.5 1.5 0 0 1 1.5 1.5 V14 L12 16.5 H3 a1.5 1.5 0 0 1 -1.5 -1.5Z" fill="#c4501a"/><path d="M3.6 1 H13 a1.5 1.5 0 0 1 1.5 1.5 V12.2 H3.6Z" fill="#f7832a"/><path d="M7 3.6h4.2v1.5H8.7v1.5h2.2v1.4H8.7v2.6H7z" fill="#fff"/><rect x="3.6" y="12.2" width="10.9" height="2.6" fill="#9a3a10"/><text x="9" y="14.6" font-size="2.6" fill="#fff" text-anchor="middle" font-family="Liberation Sans,sans-serif">FUS</text></svg>
<svg class="a" style="left:1800px;top:0" width="128" height="23" viewBox="0 0 128 23" fill="none" stroke="#111" stroke-width="1"><path d="M7 10.5h10"/><rect x="52.5" y="7.5" width="7" height="7"/><path d="M54.5 7.5v-2h7v7h-2"/><path d="M98 5.500l10 10M108 5.5l-10 10"/></svg>
<!-- tab bar -->
<div class="a" style="left:8px;top:23px;width:1920px;height:32px;background:#cbcbcb"></div>
<div class="a" style="left:202px;top:27px;width:728px;height:28px;background:#f2f2f2;border-radius:5px 5px 0 0"></div>
<div class="a" style="left:934px;top:27px;width:727px;height:28px;background:#bababa;border-radius:5px 5px 0 0"></div>
<div class="a" style="left:1666px;top:27px;width:28px;height:28px;background:#bcbcbc;border-radius:5px 5px 0 0"></div>
<svg class="a" style="left:8px;top:23px" width="200" height="32" viewBox="8 23 200 32">
<g fill="#666"><rect x="17" y="32" width="4" height="4"/><rect x="22" y="32" width="4" height="4"/><rect x="27" y="32" width="4" height="4"/><rect x="17" y="37" width="4" height="4"/><rect x="22" y="37" width="4" height="4"/><rect x="27" y="37" width="4" height="4"/><rect x="17" y="42" width="4" height="4"/><rect x="22" y="42" width="4" height="4"/><rect x="27" y="42" width="4" height="4"/>
<path d="M50 31h9l4 4v12h-13z"/><path d="M69 37h7l-3.500 4z"/>
<path d="M95 32h12l2 2v12h-14z M98 33v5h7v-5z M98 41v5h8v-5z"  fill-rule="evenodd"/><rect x="102.500" y="34" width="2" height="3"/>
<path d="M149 37h7l-3.500 4z"/></g>
<path d="M133 33l-4.500 4 4.500 4M129 37h7a5 5 0 0 1 5 5v2" fill="none" stroke="#666" stroke-width="1.800"/>
<path d="M177 33l4.500 4-4.500 4M181 37h-7a5 5 0 0 0-5 5v2" fill="none" stroke="#9a9a9a" stroke-width="1.800"/>
<path d="M187 37h7l-3.500 4z" fill="#9a9a9a"/>
</svg>
<!-- tab 1 -->
<svg class="a" style="left:490px;top:33px" width="16" height="16" viewBox="0 0 16 16"><path d="M8 1l6.500 3.200v7.600L8 15 1.500 11.800V4.200z" fill="#e8731c"/><path d="M8 1l6.500 3.200L8 7.400 1.500 4.200z" fill="#f9a45c"/><path d="M8 7.400l6.500-3.200v7.600L8 15z" fill="#c95a0e"/></svg>
<div class="t" style="left:512px;top:35px;font-size:12.3px;color:#333">pc-8801mc_open v1*</div>
<svg class="a" style="left:913px;top:35px" width="11" height="11" viewBox="0 0 11 11"><path d="M1.500 1.500l8 8M9.500 1.500l-8 8" stroke="#555" stroke-width="1.500"/></svg>
<!-- tab 2 -->
<svg class="a" style="left:1235px;top:33px" width="16" height="16" viewBox="0 0 16 16"><path d="M8 1l6.500 3.200v7.600L8 15 1.500 11.800V4.200z" fill="#e8731c"/><path d="M8 1l6.500 3.200L8 7.400 1.500 4.200z" fill="#f9a45c"/><path d="M8 7.400l6.500-3.200v7.600L8 15z" fill="#c95a0e"/></svg>
<div class="t" style="left:1256px;top:35px;font-size:12.3px;color:#555">HB-F1_open_ v2</div>
<svg class="a" style="left:1646px;top:36px" width="10" height="10" viewBox="0 0 10 10"><path d="M1 1l8 8M9 1l-8 8" stroke="#8a8a8a" stroke-width="1.300"/></svg>
<svg class="a" style="left:1673px;top:34px" width="14" height="14" viewBox="0 0 14 14"><path d="M7 .5v13M.5 7h13" stroke="#666" stroke-width="2.700"/></svg>
<!-- right icons -->
<svg class="a" style="left:1700px;top:25px" width="228" height="30" viewBox="1700 25 228 30">
<circle cx="1714" cy="39" r="8" fill="#1498d8"/><path d="M1712.500 36v7M1709 39.500h7" stroke="#fff" stroke-width="1.600"/><path d="M1717.500 33.500v3.400M1715.800 35.200h3.400" stroke="#fff" stroke-width="1"/>
<circle cx="1747" cy="39" r="6.400" fill="none" stroke="#666" stroke-width="2.400"/><path d="M1747 39l6.500-7.500" stroke="#cbcbcb" stroke-width="3.200"/><path d="M1745.500 40.500l7.800-8.300.6 6.200z" fill="#666"/>
<circle cx="1780" cy="39" r="7.500" fill="none" stroke="#666" stroke-width="1"/><circle cx="1780" cy="39" r="5.800" fill="#666"/><path d="M1780 35v4.500h3.500" stroke="#cbcbcb" stroke-width="1.300" fill="none"/>
<text x="1791" y="43.500" font-size="12" fill="#533" font-family="Liberation Sans,sans-serif">1</text>
<path d="M1829 31.500c-3.500 0-4.500 3-4.500 5.500 0 3-1.200 4.500-2.300 5.500v1h13.600v-1c-1.100-1-2.300-2.500-2.300-5.500 0-2.500-1-5.500-4.500-5.500zM1827 45h4l-2 1.800z" fill="#666"/><circle cx="1833.500" cy="35" r="3" fill="#1498d8"/>
<circle cx="1862" cy="39" r="8" fill="#666"/><text x="1862" y="44" font-size="13" font-weight="bold" fill="#cbcbcb" text-anchor="middle" font-family="Liberation Sans,sans-serif">?</text>
<defs><linearGradient id="av" x1="0" y1="0" x2="0" y2="1"><stop offset="0" stop-color="#9fb0cc"/><stop offset="1" stop-color="#8393ad"/></linearGradient><clipPath id="avc"><circle cx="1903" cy="39" r="12"/></clipPath></defs>
<circle cx="1903" cy="39" r="12" fill="url(#av)"/><g clip-path="url(#avc)" fill="#56637a"><ellipse cx="1903.500" cy="36" rx="5" ry="6.500"/><path d="M1893 52c0-6 4-7.500 7-8h7c3 .5 7 2 7 8z"/></g>
</svg>
<!-- toolbar -->
<div class="a" style="left:8px;top:55px;width:1920px;height:84.500px;background:#f2f2f2"></div>
<div class="a" style="left:8px;top:136px;width:1920px;height:1px;background:#dbdbdb"></div>
<div class="a" style="left:19.500px;top:65.500px;width:108px;height:59px;border:1.500px solid #dadada;border-radius:5px;background:#f3f3f3"></div>
<svg class="a" style="left:92px;top:94px" width="7" height="5"><path d="M0 0h7l-3.500 4.500z" fill="#333"/></svg>
<svg class="a" style="left:140px;top:56px" width="1000" height="80" viewBox="140 56 1000 80">
<defs>
<linearGradient id="gb" x1="0" y1="0" x2="1" y2="0"><stop offset="0" stop-color="#6ab0e6"/><stop offset="1" stop-color="#62a8e0"/></linearGradient>
</defs>
<!-- tab underline -->
<rect x="146.500" y="75.500" width="56" height="2.600" rx="1.300" fill="#1a8fd6"/>
<!-- separators -->
<g fill="#d6d6d6"><rect x="358" y="82" width="1.500" height="50"/><rect x="627.300" y="82" width="1.500" height="50"/><rect x="724.500" y="82" width="1.500" height="50"/><rect x="848" y="82" width="1.500" height="50"/><rect x="907.200" y="82" width="1.500" height="50"/><rect x="966.300" y="82" width="1.500" height="50"/><rect x="1063" y="82" width="1.500" height="50"/></g>
<!-- dropdown arrows -->
<g fill="#333"><path d="M254.400 124h5.600l-2.800 4z"/><path d="M501.600 124h5.600l-2.800 4z"/><path d="M694.400 124h5.600l-2.800 4z"/><path d="M828.500 124h5.600l-2.800 4z"/><path d="M889 124h5.600l-2.800 4z"/><path d="M947.500 124h5.600l-2.800 4z"/><path d="M1022.200 124h5.600l-2.800 4z"/><path d="M1102.300 124h5.600l-2.800 4z"/></g>
<!-- 1 sketch -->
<g fill="none" stroke="#555" stroke-width="1"><path d="M146.500 84v26.500M146.500 110.500h17M146.500 83.500h27M173.500 84v15" stroke-dasharray="9 3"/><path d="M153.500 90.500v13M153.500 90.500h13M166.500 90.500c0 8-5 13-13 13"/></g>
<g fill="#555"><rect x="145" y="82.200" width="2.800" height="2.800"/><rect x="172" y="82.200" width="2.800" height="2.800"/><rect x="145" y="109" width="2.800" height="2.800"/><rect x="152.200" y="89.200" width="2.600" height="2.600"/><rect x="165.200" y="89.200" width="2.600" height="2.600"/><rect x="152.200" y="102" width="2.600" height="2.600"/></g>
<path d="M168.500 100.300h3.200v5h5v3.200h-5v5h-3.200v-5h-5v-3.200h5z" fill="#1fa34a"/>
<!-- 2 extrude -->
<path d="M189 109l0 4.500h19.500l4.500-4.300v-4.500z" fill="#c4c4c4"/><path d="M189 109h19.500v4.500H189z" fill="#d4d4d4"/>
<path d="M189 87h19.500v22H189z" fill="#6ab0e6"/><path d="M189 87l4.500-4.500h19.300L208.500 87z" fill="#8cc8f5"/><path d="M208.500 87l4.300-4.500v22L208.500 109z" fill="#4a94cf"/>
<path d="M216.300 108V85" stroke="#222" stroke-width="1.200"/><path d="M214 88l2.300-4.500 2.300 4.500z" fill="#222"/>
<!-- 3 revolve -->
<path d="M231 98c4-5 10-8 17-8 5 0 10 2 15 6l-5 8c-3-2.500-6.500-3.500-10-3.500-4 0-7.500 2-10.500 5.500z" fill="#8cc8f5"/><path d="M231 98v8l6.500 5v-8z" fill="#4a94cf"/><path d="M237.500 103c3-3.500 6.500-5.500 10.500-5.500 3.500 0 7 1 10 3.500v9c-3-2.500-6.500-3.500-10-3.500-4 0-7.500 2-10.500 5z" fill="#6ab0e6"/>
<path d="M258 101l5-5v9l-5 5z" fill="#fff" stroke="#444" stroke-width=".9"/>
<path d="M233 88.500c9-6 19-6 28 0" fill="none" stroke="#222" stroke-width="1"/><path d="M231.500 89.800l3.800-3.300.6 3.600z" fill="#222"/>
<!-- 4 hole -->
<path d="M274.500 88.500l5-5.500h26l-5 5.500z" fill="#e6e6e6" stroke="#555" stroke-width=".9"/><path d="M300.500 88.500l5-5.500v25l-5 5.500z" fill="#c2c2c2" stroke="#555" stroke-width=".9"/><rect x="274.500" y="88.500" width="26" height="25" fill="#dcdcdc" stroke="#555" stroke-width=".9"/>
<circle cx="287.500" cy="100.500" r="8" fill="#fff" stroke="#555" stroke-width=".9"/><circle cx="287.500" cy="100.500" r="6" fill="#5aa3dd"/><circle cx="290.500" cy="97.500" r="4.600" fill="#fff"/>
<!-- 5 pattern -->
<path d="M320.500 88v18M324 87.500h14M324 108.500h14" stroke="#555" stroke-width="1" fill="none"/>
<rect x="317.500" y="84.500" width="6" height="6" fill="#fff" stroke="#555" stroke-width=".9"/><rect x="338" y="84" width="7" height="7" fill="#6ab0e6"/><rect x="317" y="105" width="7" height="7" fill="#6ab0e6"/><rect x="338" y="105" width="7" height="7" fill="#6ab0e6"/>
<!-- 6 press pull -->
<path d="M372.500 113.500v-26l5-5h3v31z" fill="#dcdcdc" stroke="#555" stroke-width=".9"/>
<path d="M379.500 87.500h9.500v26h-9.500z" fill="#6ab0e6"/><path d="M379.500 87.500l5-5h9.500l-5 5z" fill="#8cc8f5"/><path d="M389 87.500l5-5v26l-5 5z" fill="#4a94cf"/>
<path d="M392 97.500h7" stroke="#222" stroke-width="1.200"/><path d="M397.500 95l4 2.500-4 2.500z" fill="#222"/>
<!-- 7 fillet -->
<path d="M414.500 113.500v-25l5.500-5.500h8c9 0 17 6 17 15v10l-5.500 5.500z" fill="#c8c8c8" stroke="#555" stroke-width=".9"/>
<path d="M414.500 113.500v-25h8c9 0 17 6 17 15v10z" fill="#dcdcdc" stroke="#555" stroke-width=".9"/>
<path d="M426.500 88.500l5-5.400c8 1 14 7 14 14.500l-5.500 4.500c-1-7-6-12.500-13.500-13.600z" fill="#5aa3dd"/>
<!-- 8 shell -->
<path d="M457.500 88.500l5.500-5.500h26l-5.500 5.500z" fill="#ececec" stroke="#555" stroke-width=".9"/><path d="M483.500 88.500l5.500-5.500v25l-5.500 5.500z" fill="#c2c2c2" stroke="#555" stroke-width=".9"/><rect x="457.500" y="88.500" width="26" height="25" fill="#e6e6e6" stroke="#555" stroke-width=".9"/>
<rect x="461.500" y="93.500" width="16" height="16" fill="#fff"/><path d="M461.500 93.500h7v9.500l-7 6.500z" fill="#4a94cf"/><path d="M461.500 109.500l7-6.500h9v6.500z" fill="#8cc8f5"/>
<!-- 9 combine -->
<path d="M500 93h10v-5.500l5-5h17v17l-5 5h-6v4.500l-5 4.500h-16z" fill="#6ab0e6"/><path d="M510 87.500l5-5h17l-5 5z M500 93l4.500-1h5.500v1z" fill="#8cc8f5"/><path d="M527 87.500l5-5v17l-5 5z M516 104.500h5v4.500l-5 4.500z" fill="#4a94cf"/>
<!-- 10 offset face -->
<path d="M545.500 99h22l6-4v13l-6 5h-22z" fill="#dcdcdc" stroke="#555" stroke-width=".9"/><path d="M567.500 100v13l6-5V95z" fill="#c2c2c2" stroke="#555" stroke-width=".9"/>
<path d="M545.500 88h22v10h-22z" fill="#6ab0e6"/><path d="M545.500 88l5.500-5.500h22l-5.500 5.500z" fill="#8cc8f5"/><path d="M567.500 88l5.500-5.500v9.500l-5.500 6z" fill="#4a94cf"/>
<path d="M543 100.500h24.500l8-7.500" fill="none" stroke="#fff" stroke-width="2.400"/><path d="M543 100.500h24.500l8-7.500" fill="none" stroke="#1f8be0" stroke-width="1.100"/>
<!-- 11 move -->
<path d="M602 82.500l4.800 6.500h-3.600v7.800h7.800v-3.600l6.500 4.800-6.500 4.800v-3.600h-7.800v7.800h3.600l-4.800 6.500-4.800-6.500h3.600v-7.800h-7.800v3.600l-6.500-4.800 6.500-4.800v3.600h7.800v-7.800h-3.600z" fill="#333"/>
<!-- 12 new component -->
<path d="M640.500 101.500h12v12h-12z M652.500 101.500h12v12h-12z" fill="#dcdcdc" stroke="#555" stroke-width=".9"/><path d="M652.500 101.500l4-3.500h12l-4 3.500z" fill="#f0f0f0" stroke="#555" stroke-width=".7"/><path d="M664.500 101.500l4-3.500v12l-4 3.500z" fill="#c2c2c2" stroke="#555" stroke-width=".7"/>
<path d="M640.500 90h11.500v11.500h-11.500z" fill="#6ab0e6"/><path d="M640.500 90l3.500-3.500h11.500L652 90z" fill="#8cc8f5"/><path d="M652 90l3.500-3.500v11.500l-3.500 3.500z" fill="#4a94cf"/>
<path d="M663.500 82.500l1.500 5 4.200-3-1.800 4.800 5.100.2-4.300 2.800 4.300 2.800-5.100.2 1.800 4.800-4.200-3-1.500 5-1.500-5-4.200 3 1.800-4.800-5.100-.2 4.300-2.800-4.300-2.800 5.100-.2-1.800-4.800 4.200 3z" fill="#f5a300"/>
<!-- 13 joint -->
<path d="M685 111v-20l5.500-6.500h6v11l-3 3v9z" fill="#d0d0d0" stroke="#555" stroke-width=".9"/><ellipse cx="694.500" cy="85.300" rx="2.600" ry="1.300" fill="#f2f2f2" stroke="#555" stroke-width=".7"/>
<path d="M703 89l3.500-2 6.500 7v17.500l-6.500-6z" fill="#d8d8d8" stroke="#555" stroke-width=".9"/><path d="M700.500 97h6v8h-6z" fill="#c6c6c6" stroke="#555" stroke-width=".8"/>
<path d="M694.500 97v5M703.500 90v5" stroke="#1f8be0" stroke-width="1.100"/>
<!-- 14,15 config (disabled) -->
<g opacity=".45"><path d="M750.500 89.500l6-6.500h20v26h-26z" fill="#e9e9e9" stroke="#c4c4c4" stroke-width=".9"/><circle cx="773.800" cy="90" r="8" fill="#6ab7e4"/><path d="M772.500 87v6.500M769.300 90.200h6.500M777.200 85.500v3M775.700 87h3" stroke="#fff" stroke-width="1.200"/><path d="M768 105h13.500M768 110.500h13.500M773.500 103v4M777.500 108.500v4" stroke="#c4c4c4" stroke-width="1.300"/>
<path d="M793.500 83h26v26h-26z" fill="#ededed" stroke="#c4c4c4" stroke-width=".9"/><path d="M793.500 87h26M797 92v17M803 92v17M809 92v17M797 97.500h17M797 103h17M797 92h17" stroke="#c4c4c4" stroke-width=".9" fill="none"/><circle cx="817" cy="90" r="8" fill="#6ab7e4"/><path d="M815.700 87v6.500M812.500 90.200h6.500M820.400 85.500v3M818.900 87h3" stroke="#fff" stroke-width="1.200"/><path d="M811.500 105h13.500M811.500 110.500h13.500M817 103v4M821 108.500v4" stroke="#c4c4c4" stroke-width="1.300"/></g>
<!-- 16 construct -->
<path d="M864 112.500v-21l8-8.500h4v29.500z" fill="#dcdcdc" stroke="#555" stroke-width=".9"/><path d="M872.500 91.500l8.500-9v21l-8.500 9z" fill="#55b66c"/><path d="M872.500 91v21.500" stroke="#555" stroke-width=".9"/>
<path d="M885 91l9-8.500v21l-9 9z" fill="#e8935a"/>
<!-- 17 measure -->
<rect x="924" y="100" width="28" height="6" fill="#f5a300"/><path d="M927.500 100v2.500M931 100v2M934.500 100v2.500M938 100v2M941.500 100v2.500M945 100v2M948.500 100v2.500" stroke="#8a6200" stroke-width=".7"/>
<path d="M924.500 90v9M951.500 90v9M926 94.500h24" stroke="#555" stroke-width="1"/><path d="M928.500 92.500l-2.800 2 2.800 2M947.500 92.500l2.800 2-2.800 2" stroke="#555" stroke-width="1" fill="none"/>
<!-- 18 insert derive -->
<path d="M983.500 91.500l5-5.500h20l-5 5.500z" fill="#f2f2f2" stroke="#555" stroke-width=".9"/><path d="M1003.500 91.500l5-5.500v20l-5 5.500z" fill="#c2c2c2" stroke="#555" stroke-width=".9"/><rect x="983.500" y="91.500" width="20" height="20" fill="#dcdcdc" stroke="#555" stroke-width=".9"/>
<path d="M979 86.500h8v-3.500l8.500 5.200-8.500 5.300v-3.500h-8z" fill="#1f86dd"/>
<g fill="none" stroke="#222" stroke-width="2"><rect x="-5.200" y="-2.600" width="10.400" height="5.200" rx="2.600" transform="translate(1000 109) rotate(-35)"/><rect x="-5.200" y="-2.600" width="10.400" height="5.200" rx="2.600" transform="translate(1006 105) rotate(-35)"/></g>
<!-- 19 image -->
<rect x="1023" y="83" width="29" height="29" fill="#8cc8f5"/><path d="M1023 112v-12c3-5 7-6 10-3 3 3.500 5 6.500 7 7 2-.5 3.500-3 5.500-3.500 2.500-.5 4.500 1.500 6.500 4.500v7z" fill="#3f8fcb"/><circle cx="1044" cy="91" r="3.200" fill="#fffac0"/>
<!-- 20 select -->
<rect x="1075" y="79" width="38" height="38" fill="#0696d7"/><rect x="1078.500" y="82.500" width="27.500" height="21" fill="none" stroke="#9fe86a" stroke-width="1" stroke-dasharray="4 2.500"/>
<path d="M1099 97v15.500l3.600-3.200 2.600 5.800 2.700-1.200-2.600-5.700 4.700-.4z" fill="#fff"/>
</svg>
<svg width="0" height="0" style="position:absolute"><defs>
<linearGradient id="cyl" x1="0" y1="0" x2="1" y2="0"><stop offset="0" stop-color="#b9bec8"/><stop offset=".5" stop-color="#e6e8ec"/><stop offset="1" stop-color="#fbfbfc"/></linearGradient>
<symbol id="i-eye" width="18" height="20" viewBox="0 0 18 20"><path d="M.4 10C3 5.500 6 4.800 8.400 4.800S13.700 5.500 16.300 10C13.700 14.500 10.800 15.200 8.400 15.200S3 14.500.4 10z" fill="#9b9b9b"/><circle cx="8.400" cy="10" r="3.100" fill="#f0f0f0"/><circle cx="8.400" cy="10" r="1.700" fill="#9b9b9b"/></symbol>
<symbol id="i-body" width="20" height="20" viewBox="0 0 20 20"><rect x="1.900" y="2.700" width="14.800" height="14.600" rx="4" fill="#fff" stroke="#454c5a" stroke-width="1.200"/><path d="M5.500 8.300h8v8.300h-5c-2 0-3-1-3-2.600z" fill="url(#cyl)"/></symbol>
<symbol id="i-tri" width="12" height="20" viewBox="0 0 12 20"><path d="M1.800 4.600l7.800 6-7.800 6z" fill="#e6e6e6" stroke="#2e2e2e" stroke-width="1.300" stroke-linejoin="miter"/></symbol>
<symbol id="i-folder" width="20" height="20" viewBox="0 0 20 20"><path d="M1.800 5.400h7l-1.200 1.700h9.400v10.800H1.800z" fill="#9b9b9b"/><path d="M1.800 5.400h7.200l-1.100 1.400H1.800z" fill="#8a8a8a"/></symbol>
<symbol id="i-ext" width="20" height="20" viewBox="0 0 20 20"><path d="M1.500 14.500h9.500l2.500-2.500v3.300L11 17.800H1.500z" fill="#c9c9c9"/><path d="M1.500 5.500h9.500v9.300H1.500z" fill="#62abe4"/><path d="M1.500 5.500L4 3h9.500L11 5.500z" fill="#8cc8f5"/><path d="M11 5.500L13.500 3v9.300L11 14.800z" fill="#3f8cc9"/><path d="M16.200 14.500v-10" stroke="#222" stroke-width="1.100"/><path d="M14.500 6l1.700-3 1.700 3z" fill="#222"/></symbol>
<symbol id="i-draft" width="20" height="20" viewBox="0 0 20 20"><path d="M1.800 16.800V9c0-3 2-5 5-5h2.500l4 9-4.500 3.800z" fill="#dcdcdc" stroke="#444" stroke-width="1"/><path d="M6.300 6.800l4-2.800 4 8.500-4 3z" fill="#4f9fe0"/><path d="M12.500 3.500c1.500 1.500 2.500 3.500 3 6" stroke="#222" stroke-width="1" fill="none"/><path d="M11.500 5.200l.6-2.400 2 1.400z" fill="#222"/></symbol>
<symbol id="i-fil" width="20" height="20" viewBox="0 0 20 20"><path d="M1.800 17V5.500h5.700c5 0 9 4 9 8.500v1.500L14.500 17z" fill="#dcdcdc" stroke="#444" stroke-width="1"/><path d="M1.800 17V5.500l2-1.800h5.200" fill="none" stroke="#444" stroke-width="1"/><path d="M8.500 5.500l2-2.300c4 .6 7 4 7.200 8.300l-2.200 1.800c-.3-4-3-7.200-7-7.800z" fill="#4f9fe0"/></symbol>
</defs></svg>
<!-- browser header -->
<div class="a" style="left:12px;top:144px;width:298px;height:23px;background:#f2f2f2;border:1px solid #c9c9c9"></div>
<svg class="a" style="left:16px;top:151px" width="13" height="12" viewBox="0 0 13 12"><path d="M1 6l5-3.500v7zM6.300 6l5-3.500v7z" fill="#222"/></svg>
<svg class="a" style="left:289px;top:150px" width="12" height="12" viewBox="0 0 12 12"><circle cx="6" cy="6" r="4.600" fill="#1a1a1a"/><rect x="3.300" y="5.300" width="5.400" height="1.400" fill="#fff"/></svg>
<!-- scrollbar -->
<div class="a" style="left:16.300px;top:174px;width:5.500px;height:933px;background:rgba(190,190,190,.85)"></div>
<div class="a" style="left:16.300px;top:296px;width:5.500px;height:64px;background:#a6a6a6;border-radius:3px"></div>
<div class="a" style="left:102.2px;top:174.2px;width:138.5px;height:19.6px;background:rgba(240,240,240,.93)"></div>
<svg class="a" style="left:104.7px;top:174px" width="44" height="20"><use href="#i-eye" x="0" y="0"/><use href="#i-body" x="24" y="0"/></svg>
<div class="t" style="left:160.6px;top:179.4px;font-size:12px;color:#333;transform:scaleX(0.774);transform-origin:0 0;">CD-ROM<span class="md">・</span>ボディ</div>
<div class="a" style="left:102.2px;top:198.2px;width:158.6px;height:19.6px;background:rgba(240,240,240,.93)"></div>
<svg class="a" style="left:104.7px;top:198px" width="44" height="20"><use href="#i-eye" x="0" y="0"/><use href="#i-body" x="24" y="0"/></svg>
<div class="t" style="left:160.6px;top:203.4px;font-size:12px;color:#333;transform:scaleX(0.876);transform-origin:0 0;">CD-ROM<span class="md">・</span>蓋 (1) (1)</div>
<div class="a" style="left:102.2px;top:222.2px;width:158.6px;height:19.6px;background:rgba(240,240,240,.93)"></div>
<svg class="a" style="left:104.7px;top:222px" width="44" height="20"><use href="#i-eye" x="0" y="0"/><use href="#i-body" x="24" y="0"/></svg>
<div class="t" style="left:160.6px;top:227.4px;font-size:12px;color:#333;transform:scaleX(0.869);transform-origin:0 0;">CD-ROM<span class="md">・</span>蓋<span class="md">・</span>窓 (1)</div>
<div class="a" style="left:102.2px;top:246.2px;width:162.4px;height:19.6px;background:rgba(240,240,240,.93)"></div>
<svg class="a" style="left:104.7px;top:246px" width="44" height="20"><use href="#i-eye" x="0" y="0"/><use href="#i-body" x="24" y="0"/></svg>
<div class="t" style="left:160.6px;top:251.4px;font-size:12px;color:#333;transform:scaleX(0.741);transform-origin:0 0;">CD-ROM<span class="md">・</span>ディスプレイ</div>
<div class="a" style="left:102.2px;top:270.2px;width:150.3px;height:19.6px;background:rgba(240,240,240,.93)"></div>
<svg class="a" style="left:104.7px;top:270px" width="44" height="20"><use href="#i-eye" x="0" y="0"/><use href="#i-body" x="24" y="0"/></svg>
<div class="t" style="left:160.6px;top:275.4px;font-size:12px;color:#333;transform:scaleX(0.806);transform-origin:0 0;">CD-ROM<span class="md">・</span>ボタン1</div>
<div class="a" style="left:102.2px;top:294.2px;width:150.3px;height:19.6px;background:rgba(240,240,240,.93)"></div>
<svg class="a" style="left:104.7px;top:294px" width="44" height="20"><use href="#i-eye" x="0" y="0"/><use href="#i-body" x="24" y="0"/></svg>
<div class="t" style="left:160.6px;top:299.4px;font-size:12px;color:#333;transform:scaleX(0.806);transform-origin:0 0;">CD-ROM<span class="md">・</span>ボタン2</div>
<div class="a" style="left:102.2px;top:318.2px;width:150.3px;height:19.6px;background:rgba(240,240,240,.93)"></div>
<svg class="a" style="left:104.7px;top:318px" width="44" height="20"><use href="#i-eye" x="0" y="0"/><use href="#i-body" x="24" y="0"/></svg>
<div class="t" style="left:160.6px;top:323.4px;font-size:12px;color:#333;transform:scaleX(0.806);transform-origin:0 0;">CD-ROM<span class="md">・</span>ボタン3</div>
<div class="a" style="left:102.2px;top:342.2px;width:150.3px;height:19.6px;background:rgba(240,240,240,.93)"></div>
<svg class="a" style="left:104.7px;top:342px" width="44" height="20"><use href="#i-eye" x="0" y="0"/><use href="#i-body" x="24" y="0"/></svg>
<div class="t" style="left:160.6px;top:347.4px;font-size:12px;color:#333;transform:scaleX(0.806);transform-origin:0 0;">CD-ROM<span class="md">・</span>ボタン4</div>
<div class="a" style="left:102.2px;top:366.2px;width:150.3px;height:19.6px;background:rgba(240,240,240,.93)"></div>
<svg class="a" style="left:104.7px;top:366px" width="44" height="20"><use href="#i-eye" x="0" y="0"/><use href="#i-body" x="24" y="0"/></svg>
<div class="t" style="left:160.6px;top:371.4px;font-size:12px;color:#333;transform:scaleX(0.806);transform-origin:0 0;">CD-ROM<span class="md">・</span>ボタン5</div>
<div class="a" style="left:102.2px;top:390.2px;width:150.3px;height:19.6px;background:rgba(240,240,240,.93)"></div>
<svg class="a" style="left:104.7px;top:390px" width="44" height="20"><use href="#i-eye" x="0" y="0"/><use href="#i-body" x="24" y="0"/></svg>
<div class="t" style="left:160.6px;top:395.4px;font-size:12px;color:#333;transform:scaleX(0.806);transform-origin:0 0;">CD-ROM<span class="md">・</span>ボタン6</div>
<div class="a" style="left:84.3px;top:414.2px;width:138.7px;height:19.6px;background:rgba(240,240,240,.93)"></div>
<svg class="a" style="left:86.8px;top:414px" width="44" height="20"><use href="#i-eye" x="0" y="0"/><use href="#i-body" x="24" y="0"/></svg>
<div class="t" style="left:142.2px;top:419.4px;font-size:12px;color:#333;transform:scaleX(0.790);transform-origin:0 0;">FDD2<span class="md">・</span>レバー (1)</div>
<div class="a" style="left:84.3px;top:438.2px;width:138.7px;height:19.6px;background:rgba(240,240,240,.93)"></div>
<svg class="a" style="left:86.8px;top:438px" width="44" height="20"><use href="#i-eye" x="0" y="0"/><use href="#i-body" x="24" y="0"/></svg>
<div class="t" style="left:142.2px;top:443.4px;font-size:12px;color:#333;transform:scaleX(0.790);transform-origin:0 0;">FDD1<span class="md">・</span>レバー (1)</div>
<div class="a" style="left:84.3px;top:462.2px;width:118.7px;height:19.6px;background:rgba(240,240,240,.93)"></div>
<svg class="a" style="left:86.8px;top:462px" width="44" height="20"><use href="#i-eye" x="0" y="0"/><use href="#i-body" x="24" y="0"/></svg>
<div class="t" style="left:142.2px;top:467.4px;font-size:12px;color:#333;transform:scaleX(0.823);transform-origin:0 0;">FDD/LED/2</div>
<div class="a" style="left:84.3px;top:486.2px;width:118.7px;height:19.6px;background:rgba(240,240,240,.93)"></div>
<svg class="a" style="left:86.8px;top:486px" width="44" height="20"><use href="#i-eye" x="0" y="0"/><use href="#i-body" x="24" y="0"/></svg>
<div class="t" style="left:142.2px;top:491.4px;font-size:12px;color:#333;transform:scaleX(0.815);transform-origin:0 0;">FDD/LED/1</div>
<div class="a" style="left:84.3px;top:510.2px;width:126.9px;height:19.6px;background:rgba(240,240,240,.93)"></div>
<svg class="a" style="left:86.8px;top:510px" width="44" height="20"><use href="#i-eye" x="0" y="0"/><use href="#i-body" x="24" y="0"/></svg>
<div class="t" style="left:142.2px;top:515.4px;font-size:12px;color:#333;transform:scaleX(0.699);transform-origin:0 0;">フロントパネル</div>
<div class="a" style="left:84.3px;top:534.2px;width:186px;height:19.6px;background:rgba(240,240,240,.93)"></div>
<svg class="a" style="left:86.8px;top:534px" width="44" height="20"><use href="#i-eye" x="0" y="0"/><use href="#i-body" x="24" y="0"/></svg>
<div class="t" style="left:142.2px;top:539.4px;font-size:12px;color:#333;transform:scaleX(0.724);transform-origin:0 0;">フロントパネル<span class="md">・</span>電源スイッチ</div>
<div class="a" style="left:84.3px;top:558.2px;width:162.3px;height:19.6px;background:rgba(240,240,240,.93)"></div>
<svg class="a" style="left:86.8px;top:558px" width="44" height="20"><use href="#i-eye" x="0" y="0"/><use href="#i-body" x="24" y="0"/></svg>
<div class="t" style="left:142.2px;top:563.4px;font-size:12px;color:#333;transform:scaleX(0.687);transform-origin:0 0;">フロントパネル<span class="md">・</span>スイッチ</div>
<div class="a" style="left:84.3px;top:582.2px;width:202.7px;height:19.6px;background:rgba(240,240,240,.93)"></div>
<svg class="a" style="left:86.8px;top:582px" width="44" height="20"><use href="#i-eye" x="0" y="0"/><use href="#i-body" x="24" y="0"/></svg>
<div class="t" style="left:142.2px;top:587.4px;font-size:12px;color:#333;transform:scaleX(0.738);transform-origin:0 0;">ジョイスティックポート (1) (1) (1)</div>
<div class="a" style="left:84.3px;top:606.2px;width:138.7px;height:19.6px;background:rgba(240,240,240,.93)"></div>
<svg class="a" style="left:86.8px;top:606px" width="44" height="20"><use href="#i-eye" x="0" y="0"/><use href="#i-body" x="24" y="0"/></svg>
<div class="t" style="left:142.2px;top:611.4px;font-size:12px;color:#333;transform:scaleX(0.817);transform-origin:0 0;">ボディ<span class="md">・</span>上面<span class="md">・</span>左</div>
<div class="a" style="left:84.3px;top:630.2px;width:138.7px;height:19.6px;background:rgba(240,240,240,.93)"></div>
<svg class="a" style="left:86.8px;top:630px" width="44" height="20"><use href="#i-eye" x="0" y="0"/><use href="#i-body" x="24" y="0"/></svg>
<div class="t" style="left:142.2px;top:635.4px;font-size:12px;color:#333;transform:scaleX(0.817);transform-origin:0 0;">ボディ<span class="md">・</span>上面<span class="md">・</span>右</div>
<div class="a" style="left:84.3px;top:654.2px;width:146.4px;height:19.6px;background:rgba(240,240,240,.93)"></div>
<svg class="a" style="left:86.8px;top:654px" width="44" height="20"><use href="#i-eye" x="0" y="0"/><use href="#i-body" x="24" y="0"/></svg>
<div class="t" style="left:142.2px;top:659.4px;font-size:12px;color:#333;transform:scaleX(0.820);transform-origin:0 0;">ボディ<span class="md">・</span>上面<span class="md">・</span>左下</div>
<div class="a" style="left:84.3px;top:678.2px;width:146.4px;height:19.6px;background:rgba(240,240,240,.93)"></div>
<svg class="a" style="left:86.8px;top:678px" width="44" height="20"><use href="#i-eye" x="0" y="0"/><use href="#i-body" x="24" y="0"/></svg>
<div class="t" style="left:142.2px;top:683.4px;font-size:12px;color:#333;transform:scaleX(0.820);transform-origin:0 0;">ボディ<span class="md">・</span>上面<span class="md">・</span>右下</div>
<div class="a" style="left:84.3px;top:702.2px;width:158.5px;height:19.6px;background:rgba(240,240,240,.93)"></div>
<svg class="a" style="left:86.8px;top:702px" width="44" height="20"><use href="#i-eye" x="0" y="0"/><use href="#i-body" x="24" y="0"/></svg>
<div class="t" style="left:142.2px;top:707.4px;font-size:12px;color:#333;transform:scaleX(0.842);transform-origin:0 0;">ボディ<span class="md">・</span>上面<span class="md">・</span>背面枠</div>
<div class="a" style="left:84.3px;top:726.2px;width:122.5px;height:19.6px;background:rgba(240,240,240,.93)"></div>
<svg class="a" style="left:86.8px;top:726px" width="44" height="20"><use href="#i-eye" x="0" y="0"/><use href="#i-body" x="24" y="0"/></svg>
<div class="t" style="left:142.2px;top:731.4px;font-size:12px;color:#333;transform:scaleX(0.740);transform-origin:0 0;">内部フレーム</div>
<div class="a" style="left:84.3px;top:750.2px;width:122.5px;height:19.6px;background:rgba(240,240,240,.93)"></div>
<svg class="a" style="left:86.8px;top:750px" width="44" height="20"><use href="#i-eye" x="0" y="0"/><use href="#i-body" x="24" y="0"/></svg>
<div class="t" style="left:142.2px;top:755.4px;font-size:12px;color:#333;transform:scaleX(0.793);transform-origin:0 0;">ボディ<span class="md">・</span>底面</div>
<div class="a" style="left:84.3px;top:774.2px;width:118.7px;height:19.6px;background:rgba(240,240,240,.93)"></div>
<svg class="a" style="left:86.8px;top:774px" width="44" height="20"><use href="#i-eye" x="0" y="0"/><use href="#i-body" x="24" y="0"/></svg>
<div class="t" style="left:142.2px;top:779.4px;font-size:12px;color:#333;transform:scaleX(0.793);transform-origin:0 0;">ボディ<span class="md">・</span>背面</div>
<div class="a" style="left:84.3px;top:798.2px;width:138.7px;height:19.6px;background:rgba(240,240,240,.93)"></div>
<svg class="a" style="left:86.8px;top:798px" width="44" height="20"><use href="#i-eye" x="0" y="0"/><use href="#i-body" x="24" y="0"/></svg>
<div class="t" style="left:142.2px;top:803.4px;font-size:12px;color:#333;transform:scaleX(0.817);transform-origin:0 0;">ボディ<span class="md">・</span>上面<span class="md">・</span>前</div>
<div class="a" style="left:84.3px;top:822.2px;width:138.7px;height:19.6px;background:rgba(240,240,240,.93)"></div>
<svg class="a" style="left:86.8px;top:822px" width="44" height="20"><use href="#i-eye" x="0" y="0"/><use href="#i-body" x="24" y="0"/></svg>
<div class="t" style="left:142.2px;top:827.4px;font-size:12px;color:#333;transform:scaleX(0.817);transform-origin:0 0;">ボディ<span class="md">・</span>上面<span class="md">・</span>後</div>
<div class="a" style="left:84.3px;top:846.2px;width:162.3px;height:19.6px;background:rgba(240,240,240,.93)"></div>
<svg class="a" style="left:86.8px;top:846px" width="44" height="20"><use href="#i-eye" x="0" y="0"/><use href="#i-body" x="24" y="0"/></svg>
<div class="t" style="left:142.2px;top:851.4px;font-size:12px;color:#333;transform:scaleX(0.773);transform-origin:0 0;">CD-RONドライブ固定</div>
<div class="a" style="left:66.3px;top:870.2px;width:110.4px;height:19.6px;background:rgba(240,240,240,.93)"></div>
<svg class="a" style="left:47px;top:870px" width="64" height="20"><use href="#i-tri" x="0" y="0"/><use href="#i-eye" x="20.500" y="0"/><use href="#i-folder" x="45" y="0"/></svg>
<div class="t" style="left:124.1px;top:875.4px;font-size:12px;color:#333;transform:scaleX(0.685);transform-origin:0 0;">キャンバス</div>
<div class="a" style="left:66.3px;top:894.2px;width:138.4px;height:19.6px;background:rgba(240,240,240,.93)"></div>
<svg class="a" style="left:47px;top:894px" width="64" height="20"><use href="#i-tri" x="0" y="0"/><use href="#i-eye" x="20.500" y="0"/><use href="#i-folder" x="45" y="0"/></svg>
<div class="t" style="left:124.1px;top:899.4px;font-size:12px;color:#333;transform:scaleX(0.665);transform-origin:0 0;">コンストラクション</div>
<div class="a" style="left:66.3px;top:918.2px;width:97.3px;height:19.6px;background:rgba(240,240,240,.93)"></div>
<svg class="a" style="left:67.5px;top:918px" width="20" height="20"><use href="#i-ext" x="0" y="0"/></svg>
<div class="t" style="left:99.7px;top:923.4px;font-size:12px;color:#333;transform:scaleX(0.811);transform-origin:0 0;">押し出し106</div>
<div class="a" style="left:66.3px;top:942.2px;width:97.3px;height:19.6px;background:rgba(240,240,240,.93)"></div>
<svg class="a" style="left:67.5px;top:942px" width="20" height="20"><use href="#i-ext" x="0" y="0"/></svg>
<div class="t" style="left:99.7px;top:947.4px;font-size:12px;color:#333;transform:scaleX(0.807);transform-origin:0 0;">押し出し107</div>
<div class="a" style="left:66.3px;top:966.2px;width:97.3px;height:19.6px;background:rgba(240,240,240,.93)"></div>
<svg class="a" style="left:67.5px;top:966px" width="20" height="20"><use href="#i-ext" x="0" y="0"/></svg>
<div class="t" style="left:99.7px;top:971.4px;font-size:12px;color:#333;transform:scaleX(0.811);transform-origin:0 0;">押し出し269</div>
<div class="a" style="left:66.3px;top:990.2px;width:81.5px;height:19.6px;background:rgba(240,240,240,.93)"></div>
<svg class="a" style="left:67.5px;top:990px" width="20" height="20"><use href="#i-draft" x="0" y="0"/></svg>
<div class="t" style="left:99.7px;top:995.4px;font-size:12px;color:#333;transform:scaleX(0.881);transform-origin:0 0;">勾配470</div>
<div class="a" style="left:66.3px;top:1014.2px;width:81.5px;height:19.6px;background:rgba(240,240,240,.93)"></div>
<svg class="a" style="left:67.5px;top:1014px" width="20" height="20"><use href="#i-draft" x="0" y="0"/></svg>
<div class="t" style="left:99.7px;top:1019.4px;font-size:12px;color:#333;transform:scaleX(0.881);transform-origin:0 0;">勾配471</div>
<div class="a" style="left:66.3px;top:1038.2px;width:81.5px;height:19.6px;background:rgba(240,240,240,.93)"></div>
<svg class="a" style="left:67.5px;top:1038px" width="20" height="20"><use href="#i-draft" x="0" y="0"/></svg>
<div class="t" style="left:99.7px;top:1043.4px;font-size:12px;color:#333;transform:scaleX(0.881);transform-origin:0 0;">勾配514</div>
<div class="a" style="left:66.3px;top:1062.2px;width:97.2px;height:19.6px;background:rgba(240,240,240,.93)"></div>
<svg class="a" style="left:67.5px;top:1062px" width="20" height="20"><use href="#i-fil" x="0" y="0"/></svg>
<div class="t" style="left:99.7px;top:1067.4px;font-size:12px;color:#333;transform:scaleX(0.688);transform-origin:0 0;">フィレット515</div>
<div class="a" style="left:66.3px;top:1086.2px;width:97.2px;height:19.6px;background:rgba(240,240,240,.93)"></div>
<svg class="a" style="left:67.5px;top:1086px" width="20" height="20"><use href="#i-fil" x="0" y="0"/></svg>
<div class="t" style="left:99.7px;top:1091.4px;font-size:12px;color:#333;transform:scaleX(0.688);transform-origin:0 0;">フィレット525</div>
<!-- comment panel -->
<div class="a" style="left:12px;top:1131px;width:298px;height:23px;background:#f2f2f2;border:1px solid #c9c9c9"></div>
<svg class="a" style="left:289px;top:1137px" width="12" height="12" viewBox="0 0 12 12"><circle cx="6" cy="6" r="4.600" fill="#1a1a1a"/><rect x="3.300" y="5.300" width="5.400" height="1.400" fill="#fff"/><rect x="5.300" y="3.300" width="1.400" height="5.400" fill="#fff"/></svg>
<!-- nav bar -->
<div class="a" style="left:850px;top:1130px;width:237px;height:23.500px;background:#f0f0f0"></div>
<svg class="a" style="left:850px;top:1130px" width="237" height="24" viewBox="850 1130 237 24">
<g fill="#333"><path d="M874.500 1140h5.400l-2.700 3.600z"/><path d="M985.200 1140h5.400l-2.700 3.600z"/><path d="M1015.200 1140h5.400l-2.700 3.600z"/><path d="M1046.300 1140h5.400l-2.700 3.600z"/><path d="M1077.300 1140h5.400l-2.700 3.600z"/></g>
<!-- orbit -->
<path d="M861.500 1135v14" stroke="#222" stroke-width="2.600"/><path d="M861.500 1135v14" stroke="#fff" stroke-width="1"/><path d="M858.500 1137.500l3-4 3 4z" fill="#fff" stroke="#222" stroke-width=".8"/>
<path d="M866 1140.600c1.500.5 2.500 1.300 2.500 2.200 0 1.700-3.200 3-7 3-2.500 0-5-.5-6-1.500" fill="none" stroke="#222" stroke-width="1.400"/><path d="M857.300 1142l-3.300 3 3.800 2z" fill="#222"/>
<!-- look at -->
<path d="M886.500 1139.500h15v9.500h-15z" fill="#eef0f4" stroke="#333" stroke-width="1.100"/><rect x="889.500" y="1143" width="9" height="3.500" fill="#b8bcc6" stroke="#333" stroke-width=".9"/><path d="M888 1139l3.500-4 3 2 3.500-2.500v4.500" fill="#c9ccd4" stroke="#444" stroke-width=".8"/>
<!-- hand -->
<path d="M915.500 1149c-1.500-2-2.500-4-3.500-5.500-.6-1 .5-1.800 1.500-1l1.800 1.800v-6.500c0-1.200 1.700-1.200 1.800 0v-2c0-1.200 1.800-1.200 1.900 0v-.4c0-1.200 1.800-1.200 1.900 0v1c0-1.200 1.800-1.200 1.900 0l.2 6.500c.8-1.500 1.500-2.500 2.300-2.200 1 .5-.3 3-1.300 5.300-.6 1.500-1.500 2.500-2 3z" fill="#f4f6f8" stroke="#333" stroke-width="1"/>
<!-- zoom -->
<circle cx="941.500" cy="1141" r="4.600" fill="#dfeef0" stroke="#333" stroke-width="1.200"/><path d="M945 1144.500l4.500 4.200" stroke="#333" stroke-width="2.600" stroke-linecap="round"/><path d="M949.500 1137h4.500M951.700 1134.800v4.400M949.500 1141.500h4.500" stroke="#222" stroke-width="1"/>
<!-- zoom window -->
<rect x="964.500" y="1134.500" width="15" height="14.500" fill="none" stroke="#333" stroke-width=".9" stroke-dasharray="2 1.500"/><circle cx="970.800" cy="1140.500" r="5.600" fill="#e4f0f0" stroke="#333" stroke-width="1.300"/><path d="M975 1145l4 3.700" stroke="#333" stroke-width="2.800" stroke-linecap="round"/>
<!-- display -->
<rect x="997.500" y="1134.500" width="15" height="11.500" fill="#f4f4f4" stroke="#333" stroke-width="1.100"/><rect x="999.600" y="1136.600" width="10.800" height="7.300" fill="#8aa8dc"/><path d="M1003 1146v1.500h-2v1.300h8v-1.300h-2V1146z" fill="#d8d8d8" stroke="#555" stroke-width=".5"/>
<!-- grid -->
<rect x="1028.500" y="1134.500" width="15" height="14.500" fill="#9498a0"/><path d="M1031.500 1134.500v14.500M1034.500 1134.500v14.500M1037.500 1134.500v14.500M1040.500 1134.500v14.500M1028.500 1137.500h15M1028.500 1140.500h15M1028.500 1143.500h15M1028.500 1146.500h15" stroke="#f4f4f4" stroke-width=".9"/><rect x="1028.500" y="1134.500" width="15" height="14.500" fill="none" stroke="#333" stroke-width="1"/>
<!-- viewports -->
<rect x="1059" y="1135" width="15" height="13.500" rx="1" fill="#274a9c"/><g fill="#a9c0ea"><rect x="1060.500" y="1136.500" width="5.400" height="4.600"/><rect x="1067.200" y="1136.500" width="5.400" height="4.600"/><rect x="1060.500" y="1142.500" width="5.400" height="4.600"/><rect x="1067.200" y="1142.500" width="5.400" height="4.600"/></g>
</svg>
<!-- taskbar strip -->
<div class="a" style="left:0;top:1160px;width:1928px;height:8px;background:#111"></div>
<div class="a" style="left:56px;top:1160px;width:288px;height:8px;background:#f1f1f1"></div>
<div class="a" style="left:296px;top:1159px;width:24px;height:24px;border-radius:12px;background:#4a3a1c;border:1.500px solid #c89a2c;box-sizing:border-box"></div>
<div class="a" style="left:591px;top:1160px;width:48px;height:8px;background:#a3521e"></div>
<div class="a" style="left:689px;top:1160px;width:48px;height:8px;background:#3a3a3a"></div>
<div class="a" style="left:1827px;top:1166px;width:11px;height:2px;background:#e8e8e8"></div><div class="a" style="left:1842px;top:1166px;width:11px;height:2px;background:#e8e8e8"></div><div class="a" style="left:1923px;top:1160px;width:1px;height:8px;background:#555"></div>
<!-- left strip from window behind -->
<div class="a" style="left:0;top:0;width:8px;height:1160px;background:#fff"></div>
<div class="a" style="left:0;top:0;width:8px;height:46px;background:#dfe4ec"></div>
<div class="a" style="left:-8px;top:39px;width:16px;height:30px;background:#fff;border-radius:8px"></div>
<div class="a" style="left:0;top:86px;width:8px;height:1px;background:#ddd"></div>
<svg class="a" style="left:0;top:92px" width="8" height="8"><path d="M-1 5.500L1 3l2.500 2.500" stroke="#333" stroke-width="1.200" fill="none"/></svg>
<div class="a" style="left:0;top:104px;width:6px;height:281px;background:#606060"></div>
<svg class="a" style="left:0;top:1026px" width="8" height="8"><path d="M-2 2h5l-2.500 3z" fill="#444"/></svg>
<div class="a" style="left:0;top:1040px;width:8px;height:128px;background:#0c0c0c"></div>
<div class="t" style="left:158.7px;top:61.5px;font-size:11.5px;color:#1a8fd6;transform:scaleX(0.680);transform-origin:0 0;">ソリッド</div>
<div class="t" style="left:236.5px;top:61.5px;font-size:11.5px;color:#333;transform:scaleX(0.678);transform-origin:0 0;">サーフェス</div>
<div class="t" style="left:319px;top:61.5px;font-size:11.5px;color:#333;transform:scaleX(0.674);transform-origin:0 0;">メッシュ</div>
<div class="t" style="left:397.3px;top:61.5px;font-size:11.5px;color:#333;transform:scaleX(0.672);transform-origin:0 0;">フォーム</div>
<div class="t" style="left:475.5px;top:61.5px;font-size:11.5px;color:#333;transform:scaleX(0.706);transform-origin:0 0;">シート メタル</div>
<div class="t" style="left:573px;top:61.5px;font-size:11.5px;color:#333;transform:scaleX(0.676);transform-origin:0 0;">プラスチック</div>
<div class="t" style="left:666.4px;top:61.5px;font-size:11.5px;color:#333;transform:scaleX(0.665);transform-origin:0 0;">ユーティリティ</div>
<div class="t" style="left:229.5px;top:122.2px;font-size:11.5px;color:#333;transform:scaleX(0.926);transform-origin:0 0;">作成</div>
<div class="t" style="left:476.4px;top:122.2px;font-size:11.5px;color:#333;transform:scaleX(0.896);transform-origin:0 0;">修正</div>
<div class="t" style="left:650.3px;top:122.2px;font-size:11.5px;color:#333;transform:scaleX(0.725);transform-origin:0 0;">アセンブリ</div>
<div class="t" style="left:739px;top:122.2px;font-size:11.5px;color:#333;transform:scaleX(0.685);transform-origin:0 0;">コンフィギュレーション</div>
<div class="t" style="left:864.3px;top:122.2px;font-size:11.5px;color:#333;transform:scaleX(0.913);transform-origin:0 0;">構築</div>
<div class="t" style="left:922.6px;top:122.2px;font-size:11.5px;color:#333;transform:scaleX(0.913);transform-origin:0 0;">検査</div>
<div class="t" style="left:998.3px;top:122.2px;font-size:11.5px;color:#333;transform:scaleX(0.900);transform-origin:0 0;">挿入</div>
<div class="t" style="left:1078.6px;top:122.2px;font-size:11.5px;color:#333;transform:scaleX(0.909);transform-origin:0 0;">選択</div>
<div class="t" style="left:37.5px;top:152.1px;font-size:11.5px;color:#555;transform:scaleX(0.702);transform-origin:0 0;">ブラウザ</div>
<div class="t" style="left:36.3px;top:1138.5px;font-size:11.5px;color:#555;transform:scaleX(0.707);transform-origin:0 0;">コメント</div>
<div class="t" style="left:52.5px;top:90.5px;font-size:11.5px;color:#222;transform:scaleX(0.772);transform-origin:0 0;">デザイン</div>
<div class="t" style="left:31px;top:6.2px;font-size:12.4px;color:#111;transform:scaleX(0.956);transform-origin:0 0;">Autodesk Fusion 個人用(商用利用不可)</div>
</body></html>
